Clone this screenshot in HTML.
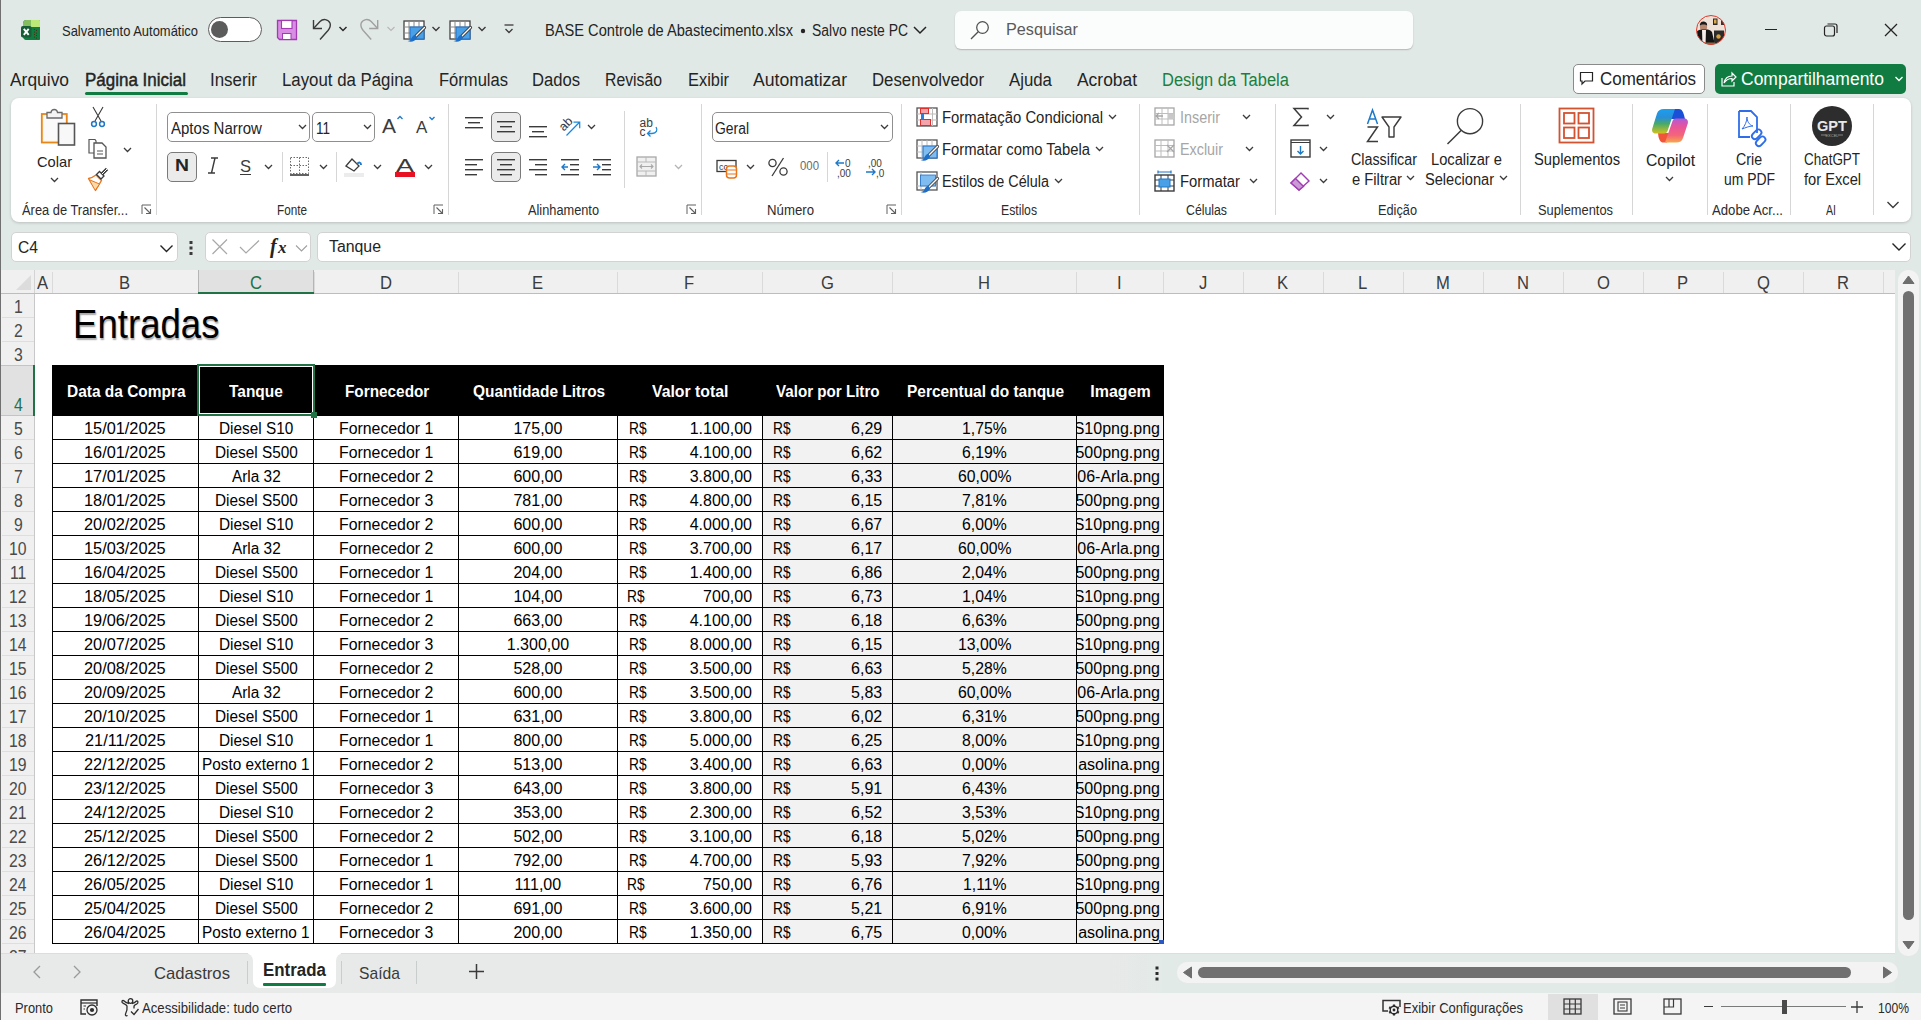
<!DOCTYPE html>
<html><head><meta charset="utf-8"><style>
html,body{margin:0;padding:0;}
body{width:1921px;height:1020px;position:relative;overflow:hidden;background:#fff;font-family:"Liberation Sans",sans-serif;}
.t{position:absolute;white-space:nowrap;line-height:1;transform-origin:0 0;}
.r{position:absolute;}
.s{position:absolute;overflow:visible;}
</style></head><body>
<div class="r" style="left:0px;top:0px;width:1921px;height:270px;background:#e1e9e6;"></div>
<div class="r" style="left:11px;top:98px;width:1900px;height:124px;background:#fff;border-radius:8px;box-shadow:0 1px 3px rgba(0,0,0,0.18);"></div>
<svg class="s" style="left:16px;top:16px;" width="30" height="30" viewBox="0 0 30 30">
<path d="M10 4 H23 C23.6 4 24 4.4 24 5 V23 C24 23.6 23.6 24 23 24 H10 C8.5 24 7 22.5 7 21 V7 C7 5.5 8.5 4 10 4 Z" fill="#107c41"/>
<path d="M10 4 H15 V11 H7 V7 C7 5.5 8.5 4 10 4 Z" fill="#86bd5e"/>
<path d="M15 4 H23 C23.6 4 24 4.4 24 5 V11 H15 Z" fill="#bce877"/>
<rect x="5" y="10" width="10.5" height="11.5" rx="1.8" fill="#175d36"/>
<path d="M7.8 12.8 L12.7 18.8 M12.7 12.8 L7.8 18.8" stroke="#fff" stroke-width="1.9"/>
<circle cx="18.5" cy="13.5" r="0.6" fill="#4a2a10"/><circle cx="18.5" cy="16" r="0.6" fill="#4a2a10"/><circle cx="18.5" cy="18.5" r="0.6" fill="#4a2a10"/><circle cx="18.5" cy="21" r="0.6" fill="#4a2a10"/>
<circle cx="20.5" cy="14.5" r="0.6" fill="#4a2a10"/><circle cx="20.5" cy="17" r="0.6" fill="#4a2a10"/><circle cx="20.5" cy="19.5" r="0.6" fill="#4a2a10"/><circle cx="20.5" cy="22" r="0.6" fill="#4a2a10"/>
</svg>
<div class="t" style="left:62.00px;top:22.65px;font-size:15px;color:#242424;transform:scaleX(0.8629);">Salvamento Automático</div>
<div class="r" style="left:208px;top:17px;width:52px;height:23px;border:1px solid #5c5c5c;border-radius:13px;background:#fff;"></div>
<div class="r" style="left:211px;top:21px;width:17px;height:17px;border-radius:50%;background:#5c5c5c;"></div>
<svg class="s" style="left:276px;top:19px;" width="22" height="22" viewBox="0 0 22 22"><path d="M1.5 1.5 H20.5 V20.5 H3.5 L1.5 18.5 Z" fill="#d88ee2" stroke="#a23ab4" stroke-width="1.3"/><rect x="5.5" y="1.5" width="10.5" height="8" fill="#fff" stroke="#a23ab4" stroke-width="1.1"/><rect x="6.5" y="14.5" width="8.5" height="6" fill="#fff" stroke="#a23ab4" stroke-width="1"/></svg>
<svg class="s" style="left:310px;top:18px;" width="24" height="24" viewBox="0 0 24 24"><path d="M3.5 2 V10.5 H12" fill="none" stroke="#3a3a3a" stroke-width="1.4"/><path d="M4 10 L10 3.5 C13 0.5 18 1 20 5 C21 8 20 10 18 12.5 L10 21.5" fill="none" stroke="#3a3a3a" stroke-width="1.4"/></svg>
<svg class="s" style="left:338px;top:25px;" width="10" height="8" viewBox="0 0 10 8"><path d="M1.5 2 L5 5.5 L8.5 2" fill="none" stroke="#2a2a2a" stroke-width="1.5"/></svg>
<svg class="s" style="left:358px;top:18px;" width="24" height="24" viewBox="0 0 24 24"><path d="M19.7 2 V10.5 H11.2" fill="none" stroke="#a0a0a0" stroke-width="1.4"/><path d="M19.2 10 L13.2 3.5 C10.2 0.5 5.2 1 3.2 5 C2.2 8 3.2 10 5.2 12.5 L13.2 21.5" fill="none" stroke="#a0a0a0" stroke-width="1.4"/></svg>
<svg class="s" style="left:386px;top:25px;" width="10" height="8" viewBox="0 0 10 8"><path d="M1.5 2 L5 5.5 L8.5 2" fill="none" stroke="#b8b8b8" stroke-width="1.2"/></svg>
<svg class="s" style="left:403px;top:20px;" width="22" height="22" viewBox="0 0 22 22"><rect x="1" y="1" width="20" height="18" fill="#fff" stroke="#444" stroke-width="1.3"/><path d="M6 1 V19 M11 1 V7 M16 1 V7 M1 7 H21 M1 13 H7" stroke="#888" stroke-width="1"/><rect x="7" y="7" width="14" height="12" fill="#4aa0e6" stroke="#1e6fc8" stroke-width="1"/><path d="M21.5 7.5 L12.5 16.5" stroke="#444" stroke-width="3.2" stroke-linecap="round"/><path d="M21.5 7.5 L12.5 16.5" stroke="#fff" stroke-width="1.2" stroke-linecap="round"/><path d="M12.8 15 C10 15 9 17 8.5 18.5 C8 20 6.5 20.8 4.5 21 C8 22.5 12 21.5 14 18 Z" fill="#1e6fc8"/></svg>
<svg class="s" style="left:431px;top:25px;" width="10" height="8" viewBox="0 0 10 8"><path d="M1.5 2 L5 5.5 L8.5 2" fill="none" stroke="#3a3a3a" stroke-width="1.4"/></svg>
<svg class="s" style="left:449px;top:20px;" width="22" height="22" viewBox="0 0 22 22"><rect x="1" y="1" width="20" height="18" fill="#fff" stroke="#444" stroke-width="1.3"/><path d="M6 1 V19 M11 1 V7 M16 1 V7 M1 7 H21 M1 13 H7" stroke="#888" stroke-width="1"/><rect x="7" y="7" width="14" height="12" fill="#4aa0e6" stroke="#1e6fc8" stroke-width="1"/><path d="M21.5 7.5 L12.5 16.5" stroke="#444" stroke-width="3.2" stroke-linecap="round"/><path d="M21.5 7.5 L12.5 16.5" stroke="#fff" stroke-width="1.2" stroke-linecap="round"/><path d="M12.8 15 C10 15 9 17 8.5 18.5 C8 20 6.5 20.8 4.5 21 C8 22.5 12 21.5 14 18 Z" fill="#1e6fc8"/></svg>
<svg class="s" style="left:477px;top:25px;" width="10" height="8" viewBox="0 0 10 8"><path d="M1.5 2 L5 5.5 L8.5 2" fill="none" stroke="#3a3a3a" stroke-width="1.4"/></svg>
<svg class="s" style="left:503px;top:23px;" width="12" height="14" viewBox="0 0 12 14"><path d="M1.5 2 H10.5" stroke="#3a3a3a" stroke-width="1.3"/><path d="M2.5 6 L6 9.5 L9.5 6" fill="none" stroke="#3a3a3a" stroke-width="1.3"/></svg>
<div class="t" style="left:545.00px;top:22.50px;font-size:16px;color:#242424;transform:scaleX(0.9141);">BASE Controle de Abastecimento.xlsx</div>
<svg class="s" style="left:799px;top:27px;" width="8" height="8" viewBox="0 0 8 8"><circle cx="4" cy="4" r="2.2" fill="#242424"/></svg>
<div class="t" style="left:812.00px;top:22.50px;font-size:16px;color:#242424;transform:scaleX(0.8704);">Salvo neste PC</div>
<svg class="s" style="left:912px;top:24px;" width="16" height="12" viewBox="0 0 16 12"><path d="M2 3 L8 9 L14 3" fill="none" stroke="#242424" stroke-width="1.5"/></svg>
<div class="r" style="left:955px;top:11px;width:458px;height:38px;background:#fbfcfc;border-radius:6px;box-shadow:0 1px 1.5px rgba(0,0,0,0.22);"></div>
<svg class="s" style="left:969px;top:19px;" width="22" height="22" viewBox="0 0 22 22"><circle cx="13.5" cy="8.5" r="5.8" fill="none" stroke="#505050" stroke-width="1.25"/><path d="M9.2 12.8 L2 20" stroke="#505050" stroke-width="1.3"/></svg>
<div class="t" style="left:1006.00px;top:20.84px;font-size:17px;color:#5a5a5a;transform:scaleX(0.9524);">Pesquisar</div>
<svg class="s" style="left:1696px;top:15px;" width="30" height="30" viewBox="0 0 30 30"><defs><clipPath id="avc"><circle cx="15" cy="15" r="14.5"/></clipPath></defs>
<g clip-path="url(#avc)">
<rect x="0" y="0" width="30" height="30" fill="#eee2d8"/>
<rect x="17" y="3.5" width="4.5" height="6.5" fill="#2a2a2a"/><rect x="18" y="4.5" width="2.5" height="4" fill="#d8a84a"/>
<rect x="25" y="5" width="3" height="5" fill="#333"/>
<ellipse cx="7.5" cy="12" rx="3.6" ry="4.2" fill="#b88770"/>
<path d="M3.8 10.5 C4 7 6 6.5 7.5 6.5 C9.5 6.5 11.2 7.5 11.2 10.5 C10 9 5 9 3.8 10.5 Z" fill="#1a1a1a"/>
<path d="M0 30 V18 C1 15 4 14.5 7.5 14.5 C11 14.5 14 14 16 17 L19 30 Z" fill="#141414"/>
<path d="M6 15 H10 L9.5 30 H6.5 Z" fill="#f3ece8"/>
<rect x="18" y="15.5" width="10" height="13" fill="#2b2b2b"/>
<circle cx="22.5" cy="21.5" r="2.2" fill="#d8a040"/>
<rect x="7" y="27.5" width="12" height="3" fill="#8a6a4a"/>
</g><circle cx="15" cy="15" r="14.5" fill="none" stroke="#e03a2a" stroke-width="1"/></svg>
<div class="r" style="left:1765px;top:29px;width:12px;height:1.3px;background:#242424;"></div>
<svg class="s" style="left:1823px;top:22px;" width="16" height="16" viewBox="0 0 16 16"><rect x="1.5" y="4" width="10" height="10" rx="2" fill="none" stroke="#242424" stroke-width="1.2"/><path d="M4.5 2 H12 C13.5 2 14 2.5 14 4 V11" fill="none" stroke="#242424" stroke-width="1.2"/></svg>
<svg class="s" style="left:1884px;top:23px;" width="14" height="14" viewBox="0 0 14 14"><path d="M1 1 L13 13 M13 1 L1 13" stroke="#242424" stroke-width="1.3"/></svg>
<div class="t" style="left:10.00px;top:70.68px;font-size:18px;color:#242424;transform:scaleX(0.9672);">Arquivo</div>
<div class="t" style="left:85.00px;top:70.68px;font-size:18px;color:#242424;transform:scaleX(0.9430);-webkit-text-stroke:0.45px #242424;">Página Inicial</div>
<div class="t" style="left:210.00px;top:70.68px;font-size:18px;color:#242424;transform:scaleX(0.9400);">Inserir</div>
<div class="t" style="left:282.00px;top:70.68px;font-size:18px;color:#242424;transform:scaleX(0.9344);">Layout da Página</div>
<div class="t" style="left:439.00px;top:70.68px;font-size:18px;color:#242424;transform:scaleX(0.9200);">Fórmulas</div>
<div class="t" style="left:532.00px;top:70.68px;font-size:18px;color:#242424;transform:scaleX(0.9231);">Dados</div>
<div class="t" style="left:605.00px;top:70.68px;font-size:18px;color:#242424;transform:scaleX(0.8769);">Revisão</div>
<div class="t" style="left:688.00px;top:70.68px;font-size:18px;color:#242424;transform:scaleX(0.9111);">Exibir</div>
<div class="t" style="left:753.00px;top:70.68px;font-size:18px;color:#242424;transform:scaleX(0.9792);">Automatizar</div>
<div class="t" style="left:872.00px;top:70.68px;font-size:18px;color:#242424;transform:scaleX(0.9326);">Desenvolvedor</div>
<div class="t" style="left:1009.00px;top:70.68px;font-size:18px;color:#242424;transform:scaleX(0.9328);">Ajuda</div>
<div class="t" style="left:1077.00px;top:70.68px;font-size:18px;color:#242424;transform:scaleX(0.9677);">Acrobat</div>
<div class="t" style="left:1162.00px;top:70.68px;font-size:18px;color:#1a7f3f;transform:scaleX(0.9143);">Design da Tabela</div>
<div class="r" style="left:85px;top:92px;width:103px;height:3px;background:#107c41;border-radius:2px;"></div>
<div class="r" style="left:1573px;top:64px;width:130px;height:28px;border:1px solid #8a8a8a;border-radius:5px;background:#fff;"></div>
<svg class="s" style="left:1579px;top:71px;" width="16" height="16" viewBox="0 0 16 16"><path d="M1.5 1.5 H13.5 V10 H6 L3 13 V10 H1.5 Z" fill="none" stroke="#242424" stroke-width="1.2"/></svg>
<div class="t" style="left:1600.00px;top:70.38px;font-size:18px;color:#242424;transform:scaleX(0.9412);">Comentários</div>
<div class="r" style="left:1715px;top:64px;width:191px;height:30px;border-radius:5px;background:#107c41;"></div>
<svg class="s" style="left:1720px;top:70px;" width="18" height="18" viewBox="0 0 18 18"><path d="M2 8 V16 H14 V12" fill="none" stroke="#fff" stroke-width="1.2"/><path d="M4 13 C5 8 8 6 12 6 V3 L16 7 L12 11 V8.5 C9 8.5 6 10 4 13 Z" fill="none" stroke="#fff" stroke-width="1.2"/></svg>
<div class="t" style="left:1741.00px;top:70.38px;font-size:18px;color:#ffffff;transform:scaleX(0.9721);">Compartilhamento</div>
<svg class="s" style="left:1894px;top:75px;" width="10" height="8" viewBox="0 0 10 8"><path d="M1.5 2 L5 5.5 L8.5 2" fill="none" stroke="#fff" stroke-width="1.4"/></svg>
<div class="r" style="left:156px;top:104px;width:1px;height:111px;background:#d6d6d6;"></div>
<div class="r" style="left:448px;top:104px;width:1px;height:111px;background:#d6d6d6;"></div>
<div class="r" style="left:701px;top:104px;width:1px;height:111px;background:#d6d6d6;"></div>
<div class="r" style="left:901px;top:104px;width:1px;height:111px;background:#d6d6d6;"></div>
<div class="r" style="left:1139px;top:104px;width:1px;height:111px;background:#d6d6d6;"></div>
<div class="r" style="left:1275px;top:104px;width:1px;height:111px;background:#d6d6d6;"></div>
<div class="r" style="left:1520px;top:104px;width:1px;height:111px;background:#d6d6d6;"></div>
<div class="r" style="left:1632px;top:104px;width:1px;height:111px;background:#d6d6d6;"></div>
<div class="r" style="left:1707px;top:104px;width:1px;height:111px;background:#d6d6d6;"></div>
<div class="r" style="left:1790px;top:104px;width:1px;height:111px;background:#d6d6d6;"></div>
<div class="r" style="left:1873px;top:104px;width:1px;height:111px;background:#d6d6d6;"></div>
<div class="t" style="left:22.00px;top:202.81px;font-size:14px;color:#2c2c2c;transform:scaleX(0.9201);">Área de Transfer...</div>
<svg class="s" style="left:141px;top:204px;" width="11" height="11" viewBox="0 0 11 11"><path d="M1 10 V1 H10" fill="none" stroke="#616161" stroke-width="1"/><path d="M3.5 3.5 L9.5 9.5 M5 9.5 H9.5 V5" fill="none" stroke="#616161" stroke-width="1.1"/></svg>
<div class="t" style="left:277.00px;top:202.81px;font-size:14px;color:#2c2c2c;transform:scaleX(0.8380);">Fonte</div>
<svg class="s" style="left:433px;top:204px;" width="11" height="11" viewBox="0 0 11 11"><path d="M1 10 V1 H10" fill="none" stroke="#616161" stroke-width="1"/><path d="M3.5 3.5 L9.5 9.5 M5 9.5 H9.5 V5" fill="none" stroke="#616161" stroke-width="1.1"/></svg>
<div class="t" style="left:528.00px;top:202.81px;font-size:14px;color:#2c2c2c;transform:scaleX(0.9126);">Alinhamento</div>
<svg class="s" style="left:686px;top:204px;" width="11" height="11" viewBox="0 0 11 11"><path d="M1 10 V1 H10" fill="none" stroke="#616161" stroke-width="1"/><path d="M3.5 3.5 L9.5 9.5 M5 9.5 H9.5 V5" fill="none" stroke="#616161" stroke-width="1.1"/></svg>
<div class="t" style="left:767.00px;top:202.81px;font-size:14px;color:#2c2c2c;transform:scaleX(0.9438);">Número</div>
<svg class="s" style="left:886px;top:204px;" width="11" height="11" viewBox="0 0 11 11"><path d="M1 10 V1 H10" fill="none" stroke="#616161" stroke-width="1"/><path d="M3.5 3.5 L9.5 9.5 M5 9.5 H9.5 V5" fill="none" stroke="#616161" stroke-width="1.1"/></svg>
<div class="t" style="left:1001.00px;top:202.81px;font-size:14px;color:#2c2c2c;transform:scaleX(0.8738);">Estilos</div>
<div class="t" style="left:1186.00px;top:202.81px;font-size:14px;color:#2c2c2c;transform:scaleX(0.8779);">Células</div>
<div class="t" style="left:1378.00px;top:202.81px;font-size:14px;color:#2c2c2c;transform:scaleX(0.9112);">Edição</div>
<div class="t" style="left:1538.00px;top:202.81px;font-size:14px;color:#2c2c2c;transform:scaleX(0.9180);">Suplementos</div>
<div class="t" style="left:1712.00px;top:202.81px;font-size:14px;color:#2c2c2c;transform:scaleX(0.9404);">Adobe Acr...</div>
<div class="t" style="left:1826.00px;top:202.81px;font-size:14px;color:#2c2c2c;transform:scaleX(0.7576);">AI</div>
<svg class="s" style="left:1886px;top:200px;" width="14" height="10" viewBox="0 0 14 10"><path d="M1.5 2 L7 7.5 L12.5 2" fill="none" stroke="#3b3b3b" stroke-width="1.4"/></svg>
<svg class="s" style="left:40px;top:106px;" width="37" height="42" viewBox="0 0 37 42">
<rect x="1.8" y="8" width="25" height="28.5" fill="#fff3dc" stroke="#e8861a" stroke-width="1.8"/>
<rect x="4" y="10" width="21" height="24.5" fill="#fafafa"/>
<path d="M7 12 V6.5 H11 C11.5 2.5 17 2.5 17.5 6.5 H22 V12 Z" fill="#f4f4f4" stroke="#6a6a6a" stroke-width="1.3"/>
<rect x="18.5" y="17.5" width="16" height="21.5" fill="#f8f8f8" stroke="#555" stroke-width="1.6"/>
</svg>
<div class="t" style="left:37.00px;top:153.65px;font-size:15px;color:#242424;transform:scaleX(0.9777);">Colar</div>
<svg class="s" style="left:49.5px;top:177.25px;" width="9" height="5.5" viewBox="0 0 9 5.5"><path d="M1 1 L4.5 4.5 L8 1" fill="none" stroke="#3b3b3b" stroke-width="1.3"/></svg>
<svg class="s" style="left:90px;top:106px;" width="16" height="22" viewBox="0 0 16 22"><path d="M3 1 L11 15 M13 1 L5 15" stroke="#3b3b3b" stroke-width="1.1"/><circle cx="4" cy="18" r="2.4" fill="none" stroke="#1e78c8" stroke-width="1.5"/><circle cx="12" cy="18" r="2.4" fill="none" stroke="#1e78c8" stroke-width="1.5"/></svg>
<svg class="s" style="left:87px;top:138px;" width="22" height="22" viewBox="0 0 22 22"><path d="M2 1.5 H8 L9 3 V15 H2 Z" fill="#fff" stroke="#555" stroke-width="1.2"/><path d="M7 5 H15 L19 9 V20 H7 Z" fill="#fff" stroke="#555" stroke-width="1.3"/><path d="M10 13 H16 M10 16 H16" stroke="#555" stroke-width="1"/></svg>
<svg class="s" style="left:122.5px;top:147.25px;" width="9" height="5.5" viewBox="0 0 9 5.5"><path d="M1 1 L4.5 4.5 L8 1" fill="none" stroke="#3b3b3b" stroke-width="1.3"/></svg>
<svg class="s" style="left:87px;top:170px;overflow:visible;" width="24" height="22" viewBox="0 0 24 22"><path d="M1.5 8.5 C4.5 8 7 6.5 9 5 L14.5 10.5 C13 13 10.5 17 8.5 20.5 Z" fill="#fff" stroke="#e8751a" stroke-width="1.4" stroke-linejoin="round"/><path d="M3 10 L12.5 14 L8.5 20" fill="#fbd9a8" stroke="#e8751a" stroke-width="1"/><path d="M9.5 4.5 L12.5 1.5 L17 6 L14 9 Z" fill="#fff" stroke="#3b3b3b" stroke-width="1.3"/><path d="M15 4 L20 -1" stroke="#3b3b3b" stroke-width="3.2"/><path d="M15 4 L20 -1" stroke="#fff" stroke-width="1"/></svg>
<div class="r" style="left:167px;top:112px;width:141px;height:28px;border:1px solid #8f8f8f;border-radius:5px;background:#fff;"></div>
<div class="t" style="left:171.00px;top:120.50px;font-size:16px;color:#242424;transform:scaleX(0.9381);">Aptos Narrow</div>
<svg class="s" style="left:297.5px;top:124.25px;" width="9" height="5.5" viewBox="0 0 9 5.5"><path d="M1 1 L4.5 4.5 L8 1" fill="none" stroke="#3b3b3b" stroke-width="1.3"/></svg>
<div class="r" style="left:312px;top:112px;width:61px;height:28px;border:1px solid #8f8f8f;border-radius:5px;background:#fff;"></div>
<div class="t" style="left:316.00px;top:120.50px;font-size:16px;color:#242424;transform:scaleX(0.8434);">11</div>
<svg class="s" style="left:362.5px;top:124.25px;" width="9" height="5.5" viewBox="0 0 9 5.5"><path d="M1 1 L4.5 4.5 L8 1" fill="none" stroke="#3b3b3b" stroke-width="1.3"/></svg>
<svg class="s" style="left:381px;top:114px;" width="24" height="22" viewBox="0 0 24 22"><text x="1" y="19" font-size="21" fill="#3b3b3b" font-family="Liberation Sans">A</text><path d="M16.5 5 L19 2.5 L21.5 5" fill="none" stroke="#1e78c8" stroke-width="1.3"/></svg>
<svg class="s" style="left:415px;top:114px;" width="24" height="22" viewBox="0 0 24 22"><text x="1" y="19" font-size="17" fill="#3b3b3b" font-family="Liberation Sans">A</text><path d="M14.5 3 L17 5.5 L19.5 3" fill="none" stroke="#1e78c8" stroke-width="1.3"/></svg>
<div class="r" style="left:167px;top:152px;width:28px;height:28px;border:1px solid #7a7a7a;border-radius:5px;background:#ebebeb;"></div>
<div class="t" style="left:175.00px;top:157.34px;font-size:17px;color:#242424;font-weight:bold;transform:scaleX(1.1382);">N</div>
<svg class="s" style="left:205px;top:155px;" width="16" height="22" viewBox="0 0 16 22"><path d="M6 3 H13 M3 18 H10 M10 3 L6.5 18" stroke="#3b3b3b" stroke-width="1.4" fill="none"/></svg>
<div class="t" style="left:240.00px;top:157.84px;font-size:17px;color:#3b3b3b;transform:scaleX(0.9735);">S</div>
<div class="r" style="left:240px;top:174px;width:11px;height:1.3px;background:#3b3b3b;"></div>
<svg class="s" style="left:263.5px;top:164.25px;" width="9" height="5.5" viewBox="0 0 9 5.5"><path d="M1 1 L4.5 4.5 L8 1" fill="none" stroke="#3b3b3b" stroke-width="1.3"/></svg>
<div class="r" style="left:282px;top:152px;width:1px;height:30px;background:#d6d6d6;"></div>
<svg class="s" style="left:289px;top:156px;" width="22" height="22" viewBox="0 0 22 22"><rect x="1.5" y="1.5" width="18" height="16" fill="none" stroke="#6a6a6a" stroke-width="1" stroke-dasharray="1.5 1.5"/><path d="M10.5 1.5 V17.5 M1.5 9.5 H19.5" stroke="#6a6a6a" stroke-width="1" stroke-dasharray="1.5 1.5"/><path d="M1 19 H20" stroke="#3b3b3b" stroke-width="1.6"/></svg>
<svg class="s" style="left:318.5px;top:164.25px;" width="9" height="5.5" viewBox="0 0 9 5.5"><path d="M1 1 L4.5 4.5 L8 1" fill="none" stroke="#3b3b3b" stroke-width="1.3"/></svg>
<div class="r" style="left:336px;top:152px;width:1px;height:30px;background:#d6d6d6;"></div>
<svg class="s" style="left:343px;top:156px;" width="24" height="24" viewBox="0 0 24 24"><path d="M3 10 L9 3 L16 10 L11 15 Z" fill="#fff" stroke="#3b3b3b" stroke-width="1.3"/><path d="M14 8 C16 6 18 6 18 9" fill="none" stroke="#1e78c8" stroke-width="2"/><rect x="1" y="17" width="20" height="4" fill="#ececec"/></svg>
<svg class="s" style="left:372.5px;top:164.25px;" width="9" height="5.5" viewBox="0 0 9 5.5"><path d="M1 1 L4.5 4.5 L8 1" fill="none" stroke="#3b3b3b" stroke-width="1.3"/></svg>
<div class="t" style="left:396.00px;top:155.53px;font-size:19px;color:#3b3b3b;transform:scaleX(1.4173);">A</div>
<div class="r" style="left:395px;top:172px;width:20px;height:5px;background:#e81123;"></div>
<svg class="s" style="left:423.5px;top:164.25px;" width="9" height="5.5" viewBox="0 0 9 5.5"><path d="M1 1 L4.5 4.5 L8 1" fill="none" stroke="#3b3b3b" stroke-width="1.3"/></svg>
<svg class="s" style="left:465px;top:117px;" width="20" height="17" viewBox="0 0 20 17"><rect x="0" y="0" width="18" height="1.4" fill="#3b3b3b"/><rect x="3" y="5" width="12" height="1.4" fill="#3b3b3b"/><rect x="0" y="10" width="18" height="1.4" fill="#3b3b3b"/></svg>
<div class="r" style="left:491px;top:112px;width:28px;height:28px;border:1px solid #7a7a7a;border-radius:5px;background:#ebebeb;"></div>
<svg class="s" style="left:497px;top:121px;" width="20" height="17" viewBox="0 0 20 17"><rect x="0" y="0" width="18" height="1.4" fill="#3b3b3b"/><rect x="3" y="5" width="12" height="1.4" fill="#3b3b3b"/><rect x="0" y="10" width="18" height="1.4" fill="#3b3b3b"/></svg>
<svg class="s" style="left:529px;top:126px;" width="20" height="17" viewBox="0 0 20 17"><rect x="0" y="0" width="18" height="1.4" fill="#3b3b3b"/><rect x="3" y="5" width="12" height="1.4" fill="#3b3b3b"/><rect x="0" y="10" width="18" height="1.4" fill="#3b3b3b"/></svg>
<svg class="s" style="left:559px;top:116px;" width="24" height="22" viewBox="0 0 24 22"><g transform="translate(6.8,7.2) rotate(-45)"><text x="-7.5" y="4.5" font-size="12.5" fill="#3b3b3b" font-family="Liberation Sans">ab</text></g><path d="M7.5 19.5 L20.5 6.2 M14.5 6 H20.7 V12.2" fill="none" stroke="#1e88d8" stroke-width="1.25"/></svg>
<svg class="s" style="left:586.5px;top:124.25px;" width="9" height="5.5" viewBox="0 0 9 5.5"><path d="M1 1 L4.5 4.5 L8 1" fill="none" stroke="#3b3b3b" stroke-width="1.3"/></svg>
<div class="r" style="left:624px;top:111px;width:1px;height:77px;background:#d6d6d6;"></div>
<svg class="s" style="left:638px;top:115px;" width="22" height="24" viewBox="0 0 22 24"><text x="1.5" y="12" font-size="12" fill="#3b3b3b" font-family="Liberation Sans">ab</text><text x="1.5" y="21" font-size="12" fill="#3b3b3b" font-family="Liberation Sans">c</text><path d="M18 12 C20 15 18.5 18.5 14 18.5 H9.5 M12.5 15.5 L9.5 18.5 L12.5 21.5" fill="none" stroke="#1e88d8" stroke-width="1.3"/></svg>
<svg class="s" style="left:465px;top:159px;" width="20" height="22" viewBox="0 0 20 22"><rect x="0" y="0" width="18" height="1.4" fill="#3b3b3b"/><rect x="0" y="5" width="12" height="1.4" fill="#3b3b3b"/><rect x="0" y="10" width="18" height="1.4" fill="#3b3b3b"/><rect x="0" y="15" width="12" height="1.4" fill="#3b3b3b"/></svg>
<div class="r" style="left:491px;top:152px;width:28px;height:28px;border:1px solid #7a7a7a;border-radius:5px;background:#ebebeb;"></div>
<svg class="s" style="left:497px;top:159px;" width="20" height="22" viewBox="0 0 20 22"><rect x="0" y="0" width="18" height="1.4" fill="#3b3b3b"/><rect x="3" y="5" width="12" height="1.4" fill="#3b3b3b"/><rect x="0" y="10" width="18" height="1.4" fill="#3b3b3b"/><rect x="3" y="15" width="12" height="1.4" fill="#3b3b3b"/></svg>
<svg class="s" style="left:529px;top:159px;" width="20" height="22" viewBox="0 0 20 22"><rect x="0" y="0" width="18" height="1.4" fill="#3b3b3b"/><rect x="6" y="5" width="12" height="1.4" fill="#3b3b3b"/><rect x="0" y="10" width="18" height="1.4" fill="#3b3b3b"/><rect x="6" y="15" width="12" height="1.4" fill="#3b3b3b"/></svg>
<svg class="s" style="left:561px;top:158px;" width="20" height="20" viewBox="0 0 20 20"><rect x="0" y="1" width="18" height="1.4" fill="#3b3b3b"/><rect x="9" y="6" width="9" height="1.4" fill="#3b3b3b"/><rect x="9" y="11" width="9" height="1.4" fill="#3b3b3b"/><rect x="0" y="16" width="18" height="1.4" fill="#3b3b3b"/><path d="M7 9 H1 M4 6 L1 9 L4 12" fill="none" stroke="#1e78c8" stroke-width="1.4"/></svg>
<svg class="s" style="left:593px;top:158px;" width="20" height="20" viewBox="0 0 20 20"><rect x="0" y="1" width="18" height="1.4" fill="#3b3b3b"/><rect x="9" y="6" width="9" height="1.4" fill="#3b3b3b"/><rect x="9" y="11" width="9" height="1.4" fill="#3b3b3b"/><rect x="0" y="16" width="18" height="1.4" fill="#3b3b3b"/><path d="M0 9 H7 M4 6 L7 9 L4 12" fill="none" stroke="#1e78c8" stroke-width="1.4"/></svg>
<svg class="s" style="left:636px;top:156px;" width="22" height="22" viewBox="0 0 22 22"><rect x="1" y="1" width="19" height="19" fill="#f0f0f0" stroke="#a8a8a8" stroke-width="1.3"/><path d="M1 6 H20 M1 15 H20 M10 1 V6 M10 15 V20" stroke="#b8b8b8" stroke-width="1"/><path d="M4 10.5 H17 M6 8.5 L4 10.5 L6 12.5 M15 8.5 L17 10.5 L15 12.5" fill="none" stroke="#a8a8a8" stroke-width="1.1"/></svg>
<svg class="s" style="left:673.5px;top:164.25px;" width="9" height="5.5" viewBox="0 0 9 5.5"><path d="M1 1 L4.5 4.5 L8 1" fill="none" stroke="#b5b5b5" stroke-width="1.3"/></svg>
<div class="r" style="left:712px;top:112px;width:179px;height:28px;border:1px solid #8f8f8f;border-radius:5px;background:#fff;"></div>
<div class="t" style="left:715.00px;top:120.50px;font-size:16px;color:#242424;transform:scaleX(0.8696);">Geral</div>
<svg class="s" style="left:879.5px;top:124.25px;" width="9" height="5.5" viewBox="0 0 9 5.5"><path d="M1 1 L4.5 4.5 L8 1" fill="none" stroke="#3b3b3b" stroke-width="1.3"/></svg>
<svg class="s" style="left:716px;top:159px;" width="24" height="22" viewBox="0 0 24 22"><rect x="1" y="1.5" width="19" height="11" fill="none" stroke="#3b3b3b" stroke-width="1.3"/><text x="3" y="10.5" font-size="9" fill="#3b3b3b" font-family="Liberation Sans">cc</text><rect x="10.5" y="7" width="10" height="12" rx="3" fill="#fff" stroke="#e8751a" stroke-width="1.5"/><path d="M11 11 H20 M11 15 H20" stroke="#e8751a" stroke-width="1.2"/></svg>
<svg class="s" style="left:745.5px;top:164.25px;" width="9" height="5.5" viewBox="0 0 9 5.5"><path d="M1 1 L4.5 4.5 L8 1" fill="none" stroke="#3b3b3b" stroke-width="1.3"/></svg>
<svg class="s" style="left:766px;top:156px;" width="24" height="22" viewBox="0 0 24 22"><circle cx="6.5" cy="7" r="3.6" fill="none" stroke="#3b3b3b" stroke-width="1.3"/><circle cx="17.5" cy="15.5" r="3.6" fill="none" stroke="#3b3b3b" stroke-width="1.3"/><path d="M17.5 2 L6 20" stroke="#3b3b3b" stroke-width="1.3"/></svg>
<div class="t" style="left:800.00px;top:160.12px;font-size:12px;color:#6a6a6a;transform:scaleX(0.9500);">000</div>
<div class="r" style="left:827px;top:152px;width:1px;height:30px;background:#d6d6d6;"></div>
<svg class="s" style="left:834px;top:157px;" width="22" height="22" viewBox="0 0 22 22"><path d="M10 6 H2 M5 3 L2 6 L5 9" fill="none" stroke="#1e78c8" stroke-width="1.4"/><text x="11" y="10" font-size="10" fill="#3b3b3b" font-family="Liberation Sans">0</text><text x="3" y="20" font-size="10" fill="#3b3b3b" font-family="Liberation Sans">,00</text></svg>
<svg class="s" style="left:865px;top:157px;" width="22" height="22" viewBox="0 0 22 22"><text x="3" y="10" font-size="10" fill="#3b3b3b" font-family="Liberation Sans">,00</text><path d="M1 15 H10 M7 12 L10 15 L7 18" fill="none" stroke="#1e78c8" stroke-width="1.4"/><text x="11" y="20" font-size="10" fill="#3b3b3b" font-family="Liberation Sans">,0</text></svg>
<svg class="s" style="left:916px;top:107px;" width="23" height="22" viewBox="0 0 23 22"><rect x="1" y="1" width="20" height="18" fill="#fff" stroke="#555" stroke-width="1.3"/><path d="M5.5 1 V19 M16.5 1 V19 M1 7 H21 M1 13 H21" stroke="#bbb" stroke-width="1"/><rect x="4.5" y="1.5" width="8" height="5" fill="#f6a3ab" stroke="#e0302e" stroke-width="1"/><rect x="4.5" y="12.5" width="10" height="6" fill="#f6a3ab" stroke="#e0302e" stroke-width="1"/><rect x="5" y="7" width="3" height="5.5" fill="#2b7fd8"/></svg>
<div class="t" style="left:942.00px;top:109.50px;font-size:16px;color:#242424;transform:scaleX(0.9285);">Formatação Condicional</div>
<svg class="s" style="left:1107.5px;top:114.25px;" width="9" height="5.5" viewBox="0 0 9 5.5"><path d="M1 1 L4.5 4.5 L8 1" fill="none" stroke="#3b3b3b" stroke-width="1.3"/></svg>
<svg class="s" style="left:916px;top:139px;" width="23" height="23" viewBox="0 0 23 23"><rect x="1" y="1" width="20" height="18" fill="#fff" stroke="#555" stroke-width="1.3"/><path d="M6 1 V19 M11 1 V7 M16 1 V7 M1 7 H21 M1 13 H7" stroke="#bbb" stroke-width="1"/><rect x="7" y="7" width="14" height="12" fill="#7fbdf0" stroke="#1e6fc8" stroke-width="1"/><path d="M21.5 7.5 L12.5 16.5" stroke="#555" stroke-width="3.2" stroke-linecap="round"/><path d="M21.5 7.5 L12.5 16.5" stroke="#fff" stroke-width="1.2" stroke-linecap="round"/><path d="M12.8 15 C10 15 9 17 8.5 18.5 C8 20 6.5 20.8 4.5 21 C8 22.5 12 21.5 14 18 Z" fill="#1e6fc8"/></svg>
<div class="t" style="left:942.00px;top:141.50px;font-size:16px;color:#242424;transform:scaleX(0.9262);">Formatar como Tabela</div>
<svg class="s" style="left:1094.5px;top:146.25px;" width="9" height="5.5" viewBox="0 0 9 5.5"><path d="M1 1 L4.5 4.5 L8 1" fill="none" stroke="#3b3b3b" stroke-width="1.3"/></svg>
<svg class="s" style="left:916px;top:171px;" width="23" height="23" viewBox="0 0 23 23"><rect x="1" y="1" width="20" height="18" fill="#fff" stroke="#555" stroke-width="1.3"/><path d="M5 1 V19 M1 15 H21" stroke="#bbb" stroke-width="1"/><rect x="4.5" y="4" width="15" height="11" fill="#7fbdf0" stroke="#1e6fc8" stroke-width="0.8"/><path d="M21.5 7.5 L12.5 16.5" stroke="#555" stroke-width="3.2" stroke-linecap="round"/><path d="M21.5 7.5 L12.5 16.5" stroke="#fff" stroke-width="1.2" stroke-linecap="round"/><path d="M12.8 15 C10 15 9 17 8.5 18.5 C8 20 6.5 20.8 4.5 21 C8 22.5 12 21.5 14 18 Z" fill="#1e6fc8"/></svg>
<div class="t" style="left:942.00px;top:173.50px;font-size:16px;color:#242424;transform:scaleX(0.8977);">Estilos de Célula</div>
<svg class="s" style="left:1053.5px;top:178.25px;" width="9" height="5.5" viewBox="0 0 9 5.5"><path d="M1 1 L4.5 4.5 L8 1" fill="none" stroke="#3b3b3b" stroke-width="1.3"/></svg>
<svg class="s" style="left:1154px;top:107px;" width="22" height="21" viewBox="0 0 22 21"><rect x="1" y="1" width="19" height="17" fill="none" stroke="#a6a6a6" stroke-width="1.3"/><path d="M1 6.5 H20 M1 12 H20 M8 1 V18 M14 1 V18" stroke="#bdbdbd" stroke-width="1"/><rect x="14" y="6.5" width="6" height="5.5" fill="#c8c8c8"/><path d="M9 9 H2 M5 6 L2 9 L5 12" fill="none" stroke="#a6a6a6" stroke-width="1.3"/></svg>
<div class="t" style="left:1180.00px;top:109.50px;font-size:16px;color:#a6a6a6;transform:scaleX(0.8989);">Inserir</div>
<svg class="s" style="left:1241.5px;top:114.25px;" width="9" height="5.5" viewBox="0 0 9 5.5"><path d="M1 1 L4.5 4.5 L8 1" fill="none" stroke="#3b3b3b" stroke-width="1.3"/></svg>
<svg class="s" style="left:1154px;top:139px;" width="22" height="21" viewBox="0 0 22 21"><rect x="1" y="1" width="19" height="17" fill="none" stroke="#a6a6a6" stroke-width="1.3"/><path d="M1 6.5 H20 M1 12 H20 M7 1 V18 M14 1 V18" stroke="#bdbdbd" stroke-width="1"/><path d="M13 6 L20 13 M20 6 L13 13" stroke="#a6a6a6" stroke-width="1.3"/></svg>
<div class="t" style="left:1180.00px;top:141.50px;font-size:16px;color:#a6a6a6;transform:scaleX(0.8958);">Excluir</div>
<svg class="s" style="left:1244.5px;top:146.25px;" width="9" height="5.5" viewBox="0 0 9 5.5"><path d="M1 1 L4.5 4.5 L8 1" fill="none" stroke="#3b3b3b" stroke-width="1.3"/></svg>
<svg class="s" style="left:1154px;top:170px;" width="22" height="22" viewBox="0 0 22 22"><rect x="1" y="5" width="19" height="16" fill="none" stroke="#3b3b3b" stroke-width="1.4"/><path d="M1 10 H20 M1 16 H20 M7 5 V21 M14 5 V21" stroke="#3b3b3b" stroke-width="1"/><rect x="5" y="9" width="11" height="8" fill="#4aa0e6" stroke="#1e78c8" stroke-width="1"/><path d="M4 2 H17 M4 0.5 V3.5 M17 0.5 V3.5" stroke="#1e78c8" stroke-width="1.2"/></svg>
<div class="t" style="left:1180.00px;top:173.50px;font-size:16px;color:#242424;transform:scaleX(0.9245);">Formatar</div>
<svg class="s" style="left:1248.5px;top:178.25px;" width="9" height="5.5" viewBox="0 0 9 5.5"><path d="M1 1 L4.5 4.5 L8 1" fill="none" stroke="#3b3b3b" stroke-width="1.3"/></svg>
<svg class="s" style="left:1292px;top:107px;" width="18" height="20" viewBox="0 0 18 20"><path d="M16 2.5 V1.5 H2 L9.5 10 L2 18.5 H16 V17.5" fill="none" stroke="#3b3b3b" stroke-width="1.5" stroke-linejoin="miter"/></svg>
<svg class="s" style="left:1325.5px;top:114.25px;" width="9" height="5.5" viewBox="0 0 9 5.5"><path d="M1 1 L4.5 4.5 L8 1" fill="none" stroke="#3b3b3b" stroke-width="1.3"/></svg>
<svg class="s" style="left:1290px;top:139px;" width="22" height="20" viewBox="0 0 22 20"><rect x="1" y="1" width="19" height="17" fill="none" stroke="#3b3b3b" stroke-width="1.4"/><path d="M1 3.5 H20" stroke="#3b3b3b" stroke-width="1"/><path d="M10.5 7 V15 M7.5 12 L10.5 15 L13.5 12" fill="none" stroke="#1e78c8" stroke-width="1.4"/></svg>
<svg class="s" style="left:1318.5px;top:146.25px;" width="9" height="5.5" viewBox="0 0 9 5.5"><path d="M1 1 L4.5 4.5 L8 1" fill="none" stroke="#3b3b3b" stroke-width="1.3"/></svg>
<svg class="s" style="left:1290px;top:171px;" width="22" height="20" viewBox="0 0 22 20"><path d="M1 12 L11 2 L19 10 L9 19 Z" fill="#fff" stroke="#a23cb5" stroke-width="1.4"/><path d="M1 12 L5.5 7.5 L13.5 15.5 L9 19 Z" fill="#c99ad4" stroke="#a23cb5" stroke-width="1.4"/></svg>
<svg class="s" style="left:1318.5px;top:178.25px;" width="9" height="5.5" viewBox="0 0 9 5.5"><path d="M1 1 L4.5 4.5 L8 1" fill="none" stroke="#3b3b3b" stroke-width="1.3"/></svg>
<svg class="s" style="left:1365px;top:107px;" width="40" height="38" viewBox="0 0 40 38"><path d="M2.5 17 L7.5 3 L12.5 17 M4.3 12 H10.7" fill="none" stroke="#1e78c8" stroke-width="1.5"/><path d="M2.5 20 H12.5 L2.5 34.5 H13" fill="none" stroke="#3b3b3b" stroke-width="1.5"/><path d="M17 10 H36 L29 20 V30 H24 V20 Z" fill="#fff" stroke="#3b3b3b" stroke-width="1.4" stroke-linejoin="round"/></svg>
<div class="t" style="left:1351.00px;top:151.50px;font-size:16px;color:#242424;transform:scaleX(0.8943);">Classificar</div>
<div class="t" style="left:1352.00px;top:171.50px;font-size:16px;color:#242424;transform:scaleX(0.9225);">e Filtrar</div>
<svg class="s" style="left:1405.5px;top:175.25px;" width="9" height="5.5" viewBox="0 0 9 5.5"><path d="M1 1 L4.5 4.5 L8 1" fill="none" stroke="#3b3b3b" stroke-width="1.3"/></svg>
<svg class="s" style="left:1445px;top:106px;" width="42" height="42" viewBox="0 0 42 42"><circle cx="25" cy="15.2" r="12.6" fill="none" stroke="#3b3b3b" stroke-width="1.4"/><path d="M16.3 24.2 L2.5 38" stroke="#3b3b3b" stroke-width="1.5"/></svg>
<div class="t" style="left:1431.00px;top:151.50px;font-size:16px;color:#242424;transform:scaleX(0.9173);">Localizar e</div>
<div class="t" style="left:1425.00px;top:171.50px;font-size:16px;color:#242424;transform:scaleX(0.9127);">Selecionar</div>
<svg class="s" style="left:1498.5px;top:175.25px;" width="9" height="5.5" viewBox="0 0 9 5.5"><path d="M1 1 L4.5 4.5 L8 1" fill="none" stroke="#3b3b3b" stroke-width="1.3"/></svg>
<svg class="s" style="left:1558px;top:107px;" width="38" height="38" viewBox="0 0 38 38"><rect x="1.5" y="1.5" width="34" height="34" fill="none" stroke="#d35230" stroke-width="1.8"/><rect x="6" y="6" width="10.5" height="10.5" fill="none" stroke="#d35230" stroke-width="1.8"/><rect x="20.5" y="6" width="10.5" height="10.5" fill="none" stroke="#d35230" stroke-width="1.8"/><rect x="6" y="20.5" width="10.5" height="10.5" fill="none" stroke="#d35230" stroke-width="1.8"/><rect x="20.5" y="20.5" width="10.5" height="10.5" fill="none" stroke="#d35230" stroke-width="1.8"/></svg>
<div class="t" style="left:1534.00px;top:151.50px;font-size:16px;color:#242424;transform:scaleX(0.9208);">Suplementos</div>
<svg class="s" style="left:1650px;top:107px;" width="40" height="38" viewBox="0 0 40 38"><defs>
<linearGradient id="cpA" x1="0" y1="0" x2="0" y2="1"><stop offset="0" stop-color="#1b9ef0"/><stop offset="0.35" stop-color="#2a8fd8"/><stop offset="0.6" stop-color="#47a96a"/><stop offset="1" stop-color="#d2c21e"/></linearGradient>
<linearGradient id="cpB" x1="0" y1="0" x2="0" y2="1"><stop offset="0" stop-color="#b35ad4"/><stop offset="0.35" stop-color="#e8559a"/><stop offset="0.7" stop-color="#f4657a"/><stop offset="1" stop-color="#f8a848"/></linearGradient></defs>
<path d="M22 2 H29 C32 2 33 5 34 8 L35 12 H21 Z" fill="#1a4fd8"/>
<path d="M8 26 H20 L17 35.5 H13 C10.5 35.5 9.5 33 8.5 30 Z" fill="#f0553a"/>
<path d="M14 2 H25 L17.5 24 C17 25.5 16 26.5 14 26.5 H6 C3 26.5 1.5 24.5 2.3 21.5 L7 6.5 C8 3.5 10 2 14 2 Z" fill="url(#cpA)"/>
<path d="M26 11.5 H34 C37 11.5 38.5 13.5 37.8 16.5 L33 31 C32 34 30 35.5 26 35.5 H15 L22.5 14 C23 12.5 24 11.5 26 11.5 Z" fill="url(#cpB)"/></svg>
<div class="t" style="left:1646.00px;top:152.34px;font-size:17px;color:#242424;transform:scaleX(0.9263);">Copilot</div>
<svg class="s" style="left:1664.5px;top:176.25px;" width="9" height="5.5" viewBox="0 0 9 5.5"><path d="M1 1 L4.5 4.5 L8 1" fill="none" stroke="#3b3b3b" stroke-width="1.3"/></svg>
<svg class="s" style="left:1736px;top:109px;" width="36" height="40" viewBox="0 0 36 40"><path d="M3 2 H15 L21 8 V24 M3 2 V28 H14" fill="none" stroke="#2f6ee8" stroke-width="1.8"/><path d="M6 20 C9 17 11 12 11 8 C11 12 13 16 17 17 C13 17 9 19 6 20 Z" fill="none" stroke="#2f6ee8" stroke-width="1"/><rect x="18" y="20" width="6" height="11" rx="3" transform="rotate(45 21 25)" fill="none" stroke="#2f6ee8" stroke-width="1.8"/><rect x="22" y="27" width="6" height="11" rx="3" transform="rotate(45 25 32)" fill="none" stroke="#2f6ee8" stroke-width="1.8"/></svg>
<div class="t" style="left:1736.00px;top:151.50px;font-size:16px;color:#242424;transform:scaleX(0.8874);">Crie</div>
<div class="t" style="left:1724.00px;top:171.50px;font-size:16px;color:#242424;transform:scaleX(0.8688);">um PDF</div>
<svg class="s" style="left:1811px;top:105px;" width="42" height="42" viewBox="0 0 42 42"><circle cx="21" cy="21" r="20" fill="#2d2d2d"/><text x="21" y="26" font-size="15" font-weight="bold" fill="#e8e8e8" text-anchor="middle" textLength="30" lengthAdjust="spacingAndGlyphs" font-family="Liberation Sans">GPT</text><path d="M10 30 H15 M27 30 H32" stroke="#aaa" stroke-width="0.7"/><text x="21" y="31.5" font-size="4" fill="#aaa" text-anchor="middle" font-family="Liberation Sans">EXCEL</text></svg>
<div class="t" style="left:1804.00px;top:151.50px;font-size:16px;color:#242424;transform:scaleX(0.8396);">ChatGPT</div>
<div class="t" style="left:1804.00px;top:171.50px;font-size:16px;color:#242424;transform:scaleX(0.9164);">for Excel</div>
<div class="r" style="left:11px;top:232px;width:167px;height:30px;background:#fff;border-radius:5px;border:1px solid #d2d2d2;box-sizing:border-box;"></div>
<div class="t" style="left:18.00px;top:239.50px;font-size:16px;color:#242424;transform:scaleX(0.9756);">C4</div>
<svg class="s" style="left:159px;top:244px;" width="15" height="10" viewBox="0 0 15 10"><path d="M1.5 1.5 L7.5 7.5 L13.5 1.5" fill="none" stroke="#242424" stroke-width="1.4"/></svg>
<svg class="s" style="left:189px;top:240px;" width="5" height="16" viewBox="0 0 5 16"><rect x="0.5" y="1" width="3" height="3" fill="#3b3b3b"/><rect x="0.5" y="6.5" width="3" height="3" fill="#3b3b3b"/><rect x="0.5" y="12" width="3" height="3" fill="#3b3b3b"/></svg>
<div class="r" style="left:205px;top:232px;width:106px;height:30px;background:#fff;border-radius:5px;border:1px solid #d2d2d2;box-sizing:border-box;"></div>
<svg class="s" style="left:211px;top:238px;" width="18" height="18" viewBox="0 0 18 18"><path d="M1.5 1.5 L16 16 M16 1.5 L1.5 16" stroke="#a8a8a8" stroke-width="1.2"/></svg>
<svg class="s" style="left:239px;top:239px;" width="22" height="16" viewBox="0 0 22 16"><path d="M1 8 L7 14 L20 1.5" fill="none" stroke="#a8a8a8" stroke-width="1.2"/></svg>
<svg class="s" style="left:269px;top:236px;" width="24" height="22" viewBox="0 0 24 22"><text x="1" y="17" font-size="20" font-style="italic" font-weight="bold" fill="#242424" font-family="Liberation Serif">f</text><text x="9" y="17" font-size="17" font-style="italic" font-weight="bold" fill="#242424" font-family="Liberation Serif">x</text></svg>
<svg class="s" style="left:295px;top:244px;" width="13" height="9" viewBox="0 0 13 9"><path d="M1 1.5 L6.5 7 L12 1.5" fill="none" stroke="#a0a0a0" stroke-width="1.1"/></svg>
<div class="r" style="left:317px;top:232px;width:1594px;height:30px;background:#fff;border-radius:5px;border:1px solid #d2d2d2;box-sizing:border-box;"></div>
<div class="t" style="left:329.00px;top:239.30px;font-size:16px;color:#242424;transform:scaleX(0.9905);">Tanque</div>
<svg class="s" style="left:1891px;top:242px;" width="16" height="10" viewBox="0 0 16 10"><path d="M1.5 1.5 L8 8 L14.5 1.5" fill="none" stroke="#242424" stroke-width="1.4"/></svg>
<div class="r" style="left:0px;top:270px;width:1895px;height:23px;background:#f0f0f0;"></div>
<svg class="s" style="left:14px;top:274px;" width="18" height="17" viewBox="0 0 18 17"><path d="M17 1 V16 H2 Z" fill="#dcdcdc"/></svg>
<div class="r" style="left:34px;top:270px;width:1px;height:23px;background:#d4d4d4;"></div>
<div class="r" style="left:198px;top:270px;width:116px;height:23px;background:#e1e1e1;"></div>
<div class="r" style="left:52px;top:272px;width:1px;height:21px;background:#dadada;"></div>
<div class="t" style="left:37.44px;top:274.56px;font-size:17.5px;color:#3c3c3c;transform:scaleX(0.9500);">A</div>
<div class="r" style="left:198px;top:272px;width:1px;height:21px;background:#dadada;"></div>
<div class="t" style="left:119.44px;top:274.56px;font-size:17.5px;color:#3c3c3c;transform:scaleX(0.9500);">B</div>
<div class="r" style="left:314px;top:272px;width:1px;height:21px;background:#dadada;"></div>
<div class="t" style="left:250.01px;top:274.56px;font-size:17.5px;color:#217346;transform:scaleX(0.9500);">C</div>
<div class="r" style="left:458px;top:272px;width:1px;height:21px;background:#dadada;"></div>
<div class="t" style="left:380.01px;top:274.56px;font-size:17.5px;color:#3c3c3c;transform:scaleX(0.9500);">D</div>
<div class="r" style="left:617px;top:272px;width:1px;height:21px;background:#dadada;"></div>
<div class="t" style="left:531.94px;top:274.56px;font-size:17.5px;color:#3c3c3c;transform:scaleX(0.9500);">E</div>
<div class="r" style="left:762px;top:272px;width:1px;height:21px;background:#dadada;"></div>
<div class="t" style="left:684.42px;top:274.56px;font-size:17.5px;color:#3c3c3c;transform:scaleX(0.9500);">F</div>
<div class="r" style="left:892px;top:272px;width:1px;height:21px;background:#dadada;"></div>
<div class="t" style="left:820.54px;top:274.56px;font-size:17.5px;color:#3c3c3c;transform:scaleX(0.9500);">G</div>
<div class="r" style="left:1076px;top:272px;width:1px;height:21px;background:#dadada;"></div>
<div class="t" style="left:978.01px;top:274.56px;font-size:17.5px;color:#3c3c3c;transform:scaleX(0.9500);">H</div>
<div class="r" style="left:1163px;top:272px;width:1px;height:21px;background:#dadada;"></div>
<div class="t" style="left:1117.17px;top:274.56px;font-size:17.5px;color:#3c3c3c;transform:scaleX(0.9500);">I</div>
<div class="r" style="left:1243px;top:272px;width:1px;height:21px;background:#dadada;"></div>
<div class="t" style="left:1198.82px;top:274.56px;font-size:17.5px;color:#3c3c3c;transform:scaleX(0.9500);">J</div>
<div class="r" style="left:1323px;top:272px;width:1px;height:21px;background:#dadada;"></div>
<div class="t" style="left:1277.44px;top:274.56px;font-size:17.5px;color:#3c3c3c;transform:scaleX(0.9500);">K</div>
<div class="r" style="left:1403px;top:272px;width:1px;height:21px;background:#dadada;"></div>
<div class="t" style="left:1358.39px;top:274.56px;font-size:17.5px;color:#3c3c3c;transform:scaleX(0.9500);">L</div>
<div class="r" style="left:1483px;top:272px;width:1px;height:21px;background:#dadada;"></div>
<div class="t" style="left:1436.07px;top:274.56px;font-size:17.5px;color:#3c3c3c;transform:scaleX(0.9500);">M</div>
<div class="r" style="left:1563px;top:272px;width:1px;height:21px;background:#dadada;"></div>
<div class="t" style="left:1517.02px;top:274.56px;font-size:17.5px;color:#3c3c3c;transform:scaleX(0.9500);">N</div>
<div class="r" style="left:1643px;top:272px;width:1px;height:21px;background:#dadada;"></div>
<div class="t" style="left:1596.54px;top:274.56px;font-size:17.5px;color:#3c3c3c;transform:scaleX(0.9500);">O</div>
<div class="r" style="left:1723px;top:272px;width:1px;height:21px;background:#dadada;"></div>
<div class="t" style="left:1677.44px;top:274.56px;font-size:17.5px;color:#3c3c3c;transform:scaleX(0.9500);">P</div>
<div class="r" style="left:1803px;top:272px;width:1px;height:21px;background:#dadada;"></div>
<div class="t" style="left:1756.54px;top:274.56px;font-size:17.5px;color:#3c3c3c;transform:scaleX(0.9500);">Q</div>
<div class="r" style="left:1883px;top:272px;width:1px;height:21px;background:#dadada;"></div>
<div class="t" style="left:1837.02px;top:274.56px;font-size:17.5px;color:#3c3c3c;transform:scaleX(0.9500);">R</div>
<div class="r" style="left:0px;top:293px;width:1895px;height:1px;background:#bdbdbd;"></div>
<div class="r" style="left:198px;top:292px;width:116px;height:2px;background:#217346;"></div>
<div class="r" style="left:198px;top:270px;width:1px;height:22px;background:#b5b5b5;"></div>
<div class="r" style="left:313px;top:270px;width:1px;height:22px;background:#b5b5b5;"></div>
<div class="r" style="left:1883px;top:272px;width:1px;height:21px;background:#dadada;"></div>
<div class="r" style="left:0px;top:294px;width:34px;height:659px;background:#f0f0f0;"></div>
<div class="r" style="left:0px;top:366px;width:34px;height:50px;background:#e1e1e1;"></div>
<div class="r" style="left:34px;top:294px;width:1px;height:659px;background:#c8c8c8;"></div>
<div class="r" style="left:33px;top:365px;width:2px;height:51px;background:#217346;"></div>
<div class="r" style="left:1px;top:365px;width:32px;height:1px;background:#c4c4c4;"></div>
<div class="r" style="left:1px;top:415px;width:32px;height:1px;background:#c4c4c4;"></div>
<div class="r" style="left:2px;top:317px;width:32px;height:1px;background:#dedede;"></div>
<div class="t" style="left:13.83px;top:298.76px;font-size:17.5px;color:#4a4a4a;transform:scaleX(0.9000);">1</div>
<div class="r" style="left:2px;top:341px;width:32px;height:1px;background:#dedede;"></div>
<div class="t" style="left:13.83px;top:322.76px;font-size:17.5px;color:#4a4a4a;transform:scaleX(0.9000);">2</div>
<div class="t" style="left:13.83px;top:346.76px;font-size:17.5px;color:#4a4a4a;transform:scaleX(0.9000);">3</div>
<div class="t" style="left:13.83px;top:396.76px;font-size:17.5px;color:#217346;transform:scaleX(0.9000);">4</div>
<div class="r" style="left:2px;top:439px;width:32px;height:1px;background:#dedede;"></div>
<div class="t" style="left:13.83px;top:420.76px;font-size:17.5px;color:#4a4a4a;transform:scaleX(0.9000);">5</div>
<div class="r" style="left:2px;top:463px;width:32px;height:1px;background:#dedede;"></div>
<div class="t" style="left:13.83px;top:444.76px;font-size:17.5px;color:#4a4a4a;transform:scaleX(0.9000);">6</div>
<div class="r" style="left:2px;top:487px;width:32px;height:1px;background:#dedede;"></div>
<div class="t" style="left:13.83px;top:468.76px;font-size:17.5px;color:#4a4a4a;transform:scaleX(0.9000);">7</div>
<div class="r" style="left:2px;top:511px;width:32px;height:1px;background:#dedede;"></div>
<div class="t" style="left:13.83px;top:492.76px;font-size:17.5px;color:#4a4a4a;transform:scaleX(0.9000);">8</div>
<div class="r" style="left:2px;top:535px;width:32px;height:1px;background:#dedede;"></div>
<div class="t" style="left:13.83px;top:516.76px;font-size:17.5px;color:#4a4a4a;transform:scaleX(0.9000);">9</div>
<div class="r" style="left:2px;top:559px;width:32px;height:1px;background:#dedede;"></div>
<div class="t" style="left:9.42px;top:540.76px;font-size:17.5px;color:#4a4a4a;transform:scaleX(0.9000);">10</div>
<div class="r" style="left:2px;top:583px;width:32px;height:1px;background:#dedede;"></div>
<div class="t" style="left:10.01px;top:564.76px;font-size:17.5px;color:#4a4a4a;transform:scaleX(0.9000);">11</div>
<div class="r" style="left:2px;top:607px;width:32px;height:1px;background:#dedede;"></div>
<div class="t" style="left:9.42px;top:588.76px;font-size:17.5px;color:#4a4a4a;transform:scaleX(0.9000);">12</div>
<div class="r" style="left:2px;top:631px;width:32px;height:1px;background:#dedede;"></div>
<div class="t" style="left:9.42px;top:612.76px;font-size:17.5px;color:#4a4a4a;transform:scaleX(0.9000);">13</div>
<div class="r" style="left:2px;top:655px;width:32px;height:1px;background:#dedede;"></div>
<div class="t" style="left:9.42px;top:636.76px;font-size:17.5px;color:#4a4a4a;transform:scaleX(0.9000);">14</div>
<div class="r" style="left:2px;top:679px;width:32px;height:1px;background:#dedede;"></div>
<div class="t" style="left:9.42px;top:660.76px;font-size:17.5px;color:#4a4a4a;transform:scaleX(0.9000);">15</div>
<div class="r" style="left:2px;top:703px;width:32px;height:1px;background:#dedede;"></div>
<div class="t" style="left:9.42px;top:684.76px;font-size:17.5px;color:#4a4a4a;transform:scaleX(0.9000);">16</div>
<div class="r" style="left:2px;top:727px;width:32px;height:1px;background:#dedede;"></div>
<div class="t" style="left:9.42px;top:708.76px;font-size:17.5px;color:#4a4a4a;transform:scaleX(0.9000);">17</div>
<div class="r" style="left:2px;top:751px;width:32px;height:1px;background:#dedede;"></div>
<div class="t" style="left:9.42px;top:732.76px;font-size:17.5px;color:#4a4a4a;transform:scaleX(0.9000);">18</div>
<div class="r" style="left:2px;top:775px;width:32px;height:1px;background:#dedede;"></div>
<div class="t" style="left:9.42px;top:756.76px;font-size:17.5px;color:#4a4a4a;transform:scaleX(0.9000);">19</div>
<div class="r" style="left:2px;top:799px;width:32px;height:1px;background:#dedede;"></div>
<div class="t" style="left:9.42px;top:780.76px;font-size:17.5px;color:#4a4a4a;transform:scaleX(0.9000);">20</div>
<div class="r" style="left:2px;top:823px;width:32px;height:1px;background:#dedede;"></div>
<div class="t" style="left:9.42px;top:804.76px;font-size:17.5px;color:#4a4a4a;transform:scaleX(0.9000);">21</div>
<div class="r" style="left:2px;top:847px;width:32px;height:1px;background:#dedede;"></div>
<div class="t" style="left:9.42px;top:828.76px;font-size:17.5px;color:#4a4a4a;transform:scaleX(0.9000);">22</div>
<div class="r" style="left:2px;top:871px;width:32px;height:1px;background:#dedede;"></div>
<div class="t" style="left:9.42px;top:852.76px;font-size:17.5px;color:#4a4a4a;transform:scaleX(0.9000);">23</div>
<div class="r" style="left:2px;top:895px;width:32px;height:1px;background:#dedede;"></div>
<div class="t" style="left:9.42px;top:876.76px;font-size:17.5px;color:#4a4a4a;transform:scaleX(0.9000);">24</div>
<div class="r" style="left:2px;top:919px;width:32px;height:1px;background:#dedede;"></div>
<div class="t" style="left:9.42px;top:900.76px;font-size:17.5px;color:#4a4a4a;transform:scaleX(0.9000);">25</div>
<div class="r" style="left:2px;top:943px;width:32px;height:1px;background:#dedede;"></div>
<div class="t" style="left:9.42px;top:924.76px;font-size:17.5px;color:#4a4a4a;transform:scaleX(0.9000);">26</div>
<div class="t" style="left:9.42px;top:948.76px;font-size:17.5px;color:#4a4a4a;transform:scaleX(0.9000);">27</div>
<div class="r" style="left:35px;top:294px;width:1860px;height:659px;background:#ffffff;"></div>
<div class="t" style="left:72.50px;top:303.58px;font-size:41px;color:#000000;transform:scaleX(0.8927);text-shadow:1px 1.5px 1.5px rgba(0,0,0,0.35);">Entradas</div>
<div class="r" style="left:52px;top:365px;width:1112px;height:51px;background:#000000;"></div>
<div class="r" style="left:762px;top:416px;width:402px;height:528px;background:#f2f2f2;"></div>
<div class="r" style="left:52px;top:439px;width:1112px;height:1px;background:#000;"></div>
<div class="r" style="left:52px;top:463px;width:1112px;height:1px;background:#000;"></div>
<div class="r" style="left:52px;top:487px;width:1112px;height:1px;background:#000;"></div>
<div class="r" style="left:52px;top:511px;width:1112px;height:1px;background:#000;"></div>
<div class="r" style="left:52px;top:535px;width:1112px;height:1px;background:#000;"></div>
<div class="r" style="left:52px;top:559px;width:1112px;height:1px;background:#000;"></div>
<div class="r" style="left:52px;top:583px;width:1112px;height:1px;background:#000;"></div>
<div class="r" style="left:52px;top:607px;width:1112px;height:1px;background:#000;"></div>
<div class="r" style="left:52px;top:631px;width:1112px;height:1px;background:#000;"></div>
<div class="r" style="left:52px;top:655px;width:1112px;height:1px;background:#000;"></div>
<div class="r" style="left:52px;top:679px;width:1112px;height:1px;background:#000;"></div>
<div class="r" style="left:52px;top:703px;width:1112px;height:1px;background:#000;"></div>
<div class="r" style="left:52px;top:727px;width:1112px;height:1px;background:#000;"></div>
<div class="r" style="left:52px;top:751px;width:1112px;height:1px;background:#000;"></div>
<div class="r" style="left:52px;top:775px;width:1112px;height:1px;background:#000;"></div>
<div class="r" style="left:52px;top:799px;width:1112px;height:1px;background:#000;"></div>
<div class="r" style="left:52px;top:823px;width:1112px;height:1px;background:#000;"></div>
<div class="r" style="left:52px;top:847px;width:1112px;height:1px;background:#000;"></div>
<div class="r" style="left:52px;top:871px;width:1112px;height:1px;background:#000;"></div>
<div class="r" style="left:52px;top:895px;width:1112px;height:1px;background:#000;"></div>
<div class="r" style="left:52px;top:919px;width:1112px;height:1px;background:#000;"></div>
<div class="r" style="left:52px;top:943px;width:1112px;height:1px;background:#000;"></div>
<div class="r" style="left:52px;top:416px;width:1px;height:528px;background:#000;"></div>
<div class="r" style="left:198px;top:416px;width:1px;height:528px;background:#000;"></div>
<div class="r" style="left:313px;top:416px;width:1px;height:528px;background:#000;"></div>
<div class="r" style="left:458px;top:416px;width:1px;height:528px;background:#000;"></div>
<div class="r" style="left:617px;top:416px;width:1px;height:528px;background:#000;"></div>
<div class="r" style="left:762px;top:416px;width:1px;height:528px;background:#000;"></div>
<div class="r" style="left:892px;top:416px;width:1px;height:528px;background:#000;"></div>
<div class="r" style="left:1076px;top:416px;width:1px;height:528px;background:#000;"></div>
<div class="r" style="left:1163px;top:416px;width:1px;height:528px;background:#000;"></div>
<div class="r" style="left:52px;top:365px;width:1px;height:579px;background:#000;"></div>
<div class="t" style="left:66.60px;top:384.00px;font-size:16px;color:#ffffff;font-weight:bold;transform:scaleX(0.9666);">Data da Compra</div>
<div class="t" style="left:229.00px;top:384.00px;font-size:16px;color:#ffffff;font-weight:bold;transform:scaleX(0.9659);">Tanque</div>
<div class="t" style="left:344.70px;top:384.00px;font-size:16px;color:#ffffff;font-weight:bold;transform:scaleX(0.9580);">Fornecedor</div>
<div class="t" style="left:472.80px;top:384.00px;font-size:16px;color:#ffffff;font-weight:bold;transform:scaleX(0.9657);">Quantidade Litros</div>
<div class="t" style="left:652.00px;top:384.00px;font-size:16px;color:#ffffff;font-weight:bold;transform:scaleX(0.9884);">Valor total</div>
<div class="t" style="left:776.00px;top:384.00px;font-size:16px;color:#ffffff;font-weight:bold;transform:scaleX(0.9469);">Valor por Litro</div>
<div class="t" style="left:906.60px;top:384.00px;font-size:16px;color:#ffffff;font-weight:bold;transform:scaleX(0.9656);">Percentual do tanque</div>
<div class="t" style="left:1090.30px;top:384.00px;font-size:16px;color:#ffffff;font-weight:bold;">Imagem</div>
<div class="t" style="left:84.35px;top:420.50px;font-size:16px;color:#000000;transform:scaleX(1.0200);">15/01/2025</div>
<div class="t" style="left:219.05px;top:420.50px;font-size:16px;color:#000000;transform:scaleX(0.9600);">Diesel S10</div>
<div class="t" style="left:338.78px;top:420.50px;font-size:16px;color:#000000;transform:scaleX(0.9900);">Fornecedor 1</div>
<div class="t" style="left:513.45px;top:420.50px;font-size:16px;color:#000000;">175,00</div>
<div class="t" style="left:629.00px;top:420.50px;font-size:16px;color:#000000;transform:scaleX(0.8585);">R$</div>
<div class="t" style="left:689.70px;top:420.50px;font-size:16px;color:#000000;">1.100,00</div>
<div class="t" style="left:772.60px;top:420.50px;font-size:16px;color:#000000;transform:scaleX(0.8585);">R$</div>
<div class="t" style="left:851.10px;top:420.50px;font-size:16px;color:#000000;">6,29</div>
<div class="t" style="left:962.24px;top:420.50px;font-size:16px;color:#000000;transform:scaleX(0.9850);">1,75%</div>
<div class="r" style="left:1077px;top:416px;width:86px;height:23px;overflow:hidden;">
<div class="t" style="right:3px;top:4.50px;font-size:16px;color:#000;">S10png.png</div>
</div>
<div class="t" style="left:84.35px;top:444.50px;font-size:16px;color:#000000;transform:scaleX(1.0200);">16/01/2025</div>
<div class="t" style="left:214.78px;top:444.50px;font-size:16px;color:#000000;transform:scaleX(0.9600);">Diesel S500</div>
<div class="t" style="left:338.78px;top:444.50px;font-size:16px;color:#000000;transform:scaleX(0.9900);">Fornecedor 1</div>
<div class="t" style="left:513.45px;top:444.50px;font-size:16px;color:#000000;">619,00</div>
<div class="t" style="left:629.00px;top:444.50px;font-size:16px;color:#000000;transform:scaleX(0.8585);">R$</div>
<div class="t" style="left:689.70px;top:444.50px;font-size:16px;color:#000000;">4.100,00</div>
<div class="t" style="left:772.60px;top:444.50px;font-size:16px;color:#000000;transform:scaleX(0.8585);">R$</div>
<div class="t" style="left:851.10px;top:444.50px;font-size:16px;color:#000000;">6,62</div>
<div class="t" style="left:962.24px;top:444.50px;font-size:16px;color:#000000;transform:scaleX(0.9850);">6,19%</div>
<div class="r" style="left:1077px;top:440px;width:86px;height:23px;overflow:hidden;">
<div class="t" style="right:3px;top:4.50px;font-size:16px;color:#000;">500png.png</div>
</div>
<div class="t" style="left:84.35px;top:468.50px;font-size:16px;color:#000000;transform:scaleX(1.0200);">17/01/2025</div>
<div class="t" style="left:231.86px;top:468.50px;font-size:16px;color:#000000;transform:scaleX(0.9600);">Arla 32</div>
<div class="t" style="left:338.78px;top:468.50px;font-size:16px;color:#000000;transform:scaleX(0.9900);">Fornecedor 2</div>
<div class="t" style="left:513.45px;top:468.50px;font-size:16px;color:#000000;">600,00</div>
<div class="t" style="left:629.00px;top:468.50px;font-size:16px;color:#000000;transform:scaleX(0.8585);">R$</div>
<div class="t" style="left:689.70px;top:468.50px;font-size:16px;color:#000000;">3.800,00</div>
<div class="t" style="left:772.60px;top:468.50px;font-size:16px;color:#000000;transform:scaleX(0.8585);">R$</div>
<div class="t" style="left:851.10px;top:468.50px;font-size:16px;color:#000000;">6,33</div>
<div class="t" style="left:957.86px;top:468.50px;font-size:16px;color:#000000;transform:scaleX(0.9850);">60,00%</div>
<div class="r" style="left:1077px;top:464px;width:86px;height:23px;overflow:hidden;">
<div class="t" style="right:3px;top:4.50px;font-size:16px;color:#000;">06-Arla.png</div>
</div>
<div class="t" style="left:84.35px;top:492.50px;font-size:16px;color:#000000;transform:scaleX(1.0200);">18/01/2025</div>
<div class="t" style="left:214.78px;top:492.50px;font-size:16px;color:#000000;transform:scaleX(0.9600);">Diesel S500</div>
<div class="t" style="left:338.78px;top:492.50px;font-size:16px;color:#000000;transform:scaleX(0.9900);">Fornecedor 3</div>
<div class="t" style="left:513.45px;top:492.50px;font-size:16px;color:#000000;">781,00</div>
<div class="t" style="left:629.00px;top:492.50px;font-size:16px;color:#000000;transform:scaleX(0.8585);">R$</div>
<div class="t" style="left:689.70px;top:492.50px;font-size:16px;color:#000000;">4.800,00</div>
<div class="t" style="left:772.60px;top:492.50px;font-size:16px;color:#000000;transform:scaleX(0.8585);">R$</div>
<div class="t" style="left:851.10px;top:492.50px;font-size:16px;color:#000000;">6,15</div>
<div class="t" style="left:962.24px;top:492.50px;font-size:16px;color:#000000;transform:scaleX(0.9850);">7,81%</div>
<div class="r" style="left:1077px;top:488px;width:86px;height:23px;overflow:hidden;">
<div class="t" style="right:3px;top:4.50px;font-size:16px;color:#000;">500png.png</div>
</div>
<div class="t" style="left:84.35px;top:516.50px;font-size:16px;color:#000000;transform:scaleX(1.0200);">20/02/2025</div>
<div class="t" style="left:219.05px;top:516.50px;font-size:16px;color:#000000;transform:scaleX(0.9600);">Diesel S10</div>
<div class="t" style="left:338.78px;top:516.50px;font-size:16px;color:#000000;transform:scaleX(0.9900);">Fornecedor 2</div>
<div class="t" style="left:513.45px;top:516.50px;font-size:16px;color:#000000;">600,00</div>
<div class="t" style="left:629.00px;top:516.50px;font-size:16px;color:#000000;transform:scaleX(0.8585);">R$</div>
<div class="t" style="left:689.70px;top:516.50px;font-size:16px;color:#000000;">4.000,00</div>
<div class="t" style="left:772.60px;top:516.50px;font-size:16px;color:#000000;transform:scaleX(0.8585);">R$</div>
<div class="t" style="left:851.10px;top:516.50px;font-size:16px;color:#000000;">6,67</div>
<div class="t" style="left:962.24px;top:516.50px;font-size:16px;color:#000000;transform:scaleX(0.9850);">6,00%</div>
<div class="r" style="left:1077px;top:512px;width:86px;height:23px;overflow:hidden;">
<div class="t" style="right:3px;top:4.50px;font-size:16px;color:#000;">S10png.png</div>
</div>
<div class="t" style="left:84.35px;top:540.50px;font-size:16px;color:#000000;transform:scaleX(1.0200);">15/03/2025</div>
<div class="t" style="left:231.86px;top:540.50px;font-size:16px;color:#000000;transform:scaleX(0.9600);">Arla 32</div>
<div class="t" style="left:338.78px;top:540.50px;font-size:16px;color:#000000;transform:scaleX(0.9900);">Fornecedor 2</div>
<div class="t" style="left:513.45px;top:540.50px;font-size:16px;color:#000000;">600,00</div>
<div class="t" style="left:629.00px;top:540.50px;font-size:16px;color:#000000;transform:scaleX(0.8585);">R$</div>
<div class="t" style="left:689.70px;top:540.50px;font-size:16px;color:#000000;">3.700,00</div>
<div class="t" style="left:772.60px;top:540.50px;font-size:16px;color:#000000;transform:scaleX(0.8585);">R$</div>
<div class="t" style="left:851.10px;top:540.50px;font-size:16px;color:#000000;">6,17</div>
<div class="t" style="left:957.86px;top:540.50px;font-size:16px;color:#000000;transform:scaleX(0.9850);">60,00%</div>
<div class="r" style="left:1077px;top:536px;width:86px;height:23px;overflow:hidden;">
<div class="t" style="right:3px;top:4.50px;font-size:16px;color:#000;">06-Arla.png</div>
</div>
<div class="t" style="left:84.35px;top:564.50px;font-size:16px;color:#000000;transform:scaleX(1.0200);">16/04/2025</div>
<div class="t" style="left:214.78px;top:564.50px;font-size:16px;color:#000000;transform:scaleX(0.9600);">Diesel S500</div>
<div class="t" style="left:338.78px;top:564.50px;font-size:16px;color:#000000;transform:scaleX(0.9900);">Fornecedor 1</div>
<div class="t" style="left:513.45px;top:564.50px;font-size:16px;color:#000000;">204,00</div>
<div class="t" style="left:629.00px;top:564.50px;font-size:16px;color:#000000;transform:scaleX(0.8585);">R$</div>
<div class="t" style="left:689.70px;top:564.50px;font-size:16px;color:#000000;">1.400,00</div>
<div class="t" style="left:772.60px;top:564.50px;font-size:16px;color:#000000;transform:scaleX(0.8585);">R$</div>
<div class="t" style="left:851.10px;top:564.50px;font-size:16px;color:#000000;">6,86</div>
<div class="t" style="left:962.24px;top:564.50px;font-size:16px;color:#000000;transform:scaleX(0.9850);">2,04%</div>
<div class="r" style="left:1077px;top:560px;width:86px;height:23px;overflow:hidden;">
<div class="t" style="right:3px;top:4.50px;font-size:16px;color:#000;">500png.png</div>
</div>
<div class="t" style="left:84.35px;top:588.50px;font-size:16px;color:#000000;transform:scaleX(1.0200);">18/05/2025</div>
<div class="t" style="left:219.05px;top:588.50px;font-size:16px;color:#000000;transform:scaleX(0.9600);">Diesel S10</div>
<div class="t" style="left:338.78px;top:588.50px;font-size:16px;color:#000000;transform:scaleX(0.9900);">Fornecedor 1</div>
<div class="t" style="left:513.45px;top:588.50px;font-size:16px;color:#000000;">104,00</div>
<div class="t" style="left:627.00px;top:588.50px;font-size:16px;color:#000000;transform:scaleX(0.8585);">R$</div>
<div class="t" style="left:703.10px;top:588.50px;font-size:16px;color:#000000;">700,00</div>
<div class="t" style="left:772.60px;top:588.50px;font-size:16px;color:#000000;transform:scaleX(0.8585);">R$</div>
<div class="t" style="left:851.10px;top:588.50px;font-size:16px;color:#000000;">6,73</div>
<div class="t" style="left:962.24px;top:588.50px;font-size:16px;color:#000000;transform:scaleX(0.9850);">1,04%</div>
<div class="r" style="left:1077px;top:584px;width:86px;height:23px;overflow:hidden;">
<div class="t" style="right:3px;top:4.50px;font-size:16px;color:#000;">S10png.png</div>
</div>
<div class="t" style="left:84.35px;top:612.50px;font-size:16px;color:#000000;transform:scaleX(1.0200);">19/06/2025</div>
<div class="t" style="left:214.78px;top:612.50px;font-size:16px;color:#000000;transform:scaleX(0.9600);">Diesel S500</div>
<div class="t" style="left:338.78px;top:612.50px;font-size:16px;color:#000000;transform:scaleX(0.9900);">Fornecedor 2</div>
<div class="t" style="left:513.45px;top:612.50px;font-size:16px;color:#000000;">663,00</div>
<div class="t" style="left:629.00px;top:612.50px;font-size:16px;color:#000000;transform:scaleX(0.8585);">R$</div>
<div class="t" style="left:689.70px;top:612.50px;font-size:16px;color:#000000;">4.100,00</div>
<div class="t" style="left:772.60px;top:612.50px;font-size:16px;color:#000000;transform:scaleX(0.8585);">R$</div>
<div class="t" style="left:851.10px;top:612.50px;font-size:16px;color:#000000;">6,18</div>
<div class="t" style="left:962.24px;top:612.50px;font-size:16px;color:#000000;transform:scaleX(0.9850);">6,63%</div>
<div class="r" style="left:1077px;top:608px;width:86px;height:23px;overflow:hidden;">
<div class="t" style="right:3px;top:4.50px;font-size:16px;color:#000;">500png.png</div>
</div>
<div class="t" style="left:84.35px;top:636.50px;font-size:16px;color:#000000;transform:scaleX(1.0200);">20/07/2025</div>
<div class="t" style="left:219.05px;top:636.50px;font-size:16px;color:#000000;transform:scaleX(0.9600);">Diesel S10</div>
<div class="t" style="left:338.78px;top:636.50px;font-size:16px;color:#000000;transform:scaleX(0.9900);">Fornecedor 3</div>
<div class="t" style="left:506.75px;top:636.50px;font-size:16px;color:#000000;">1.300,00</div>
<div class="t" style="left:629.00px;top:636.50px;font-size:16px;color:#000000;transform:scaleX(0.8585);">R$</div>
<div class="t" style="left:689.70px;top:636.50px;font-size:16px;color:#000000;">8.000,00</div>
<div class="t" style="left:772.60px;top:636.50px;font-size:16px;color:#000000;transform:scaleX(0.8585);">R$</div>
<div class="t" style="left:851.10px;top:636.50px;font-size:16px;color:#000000;">6,15</div>
<div class="t" style="left:957.86px;top:636.50px;font-size:16px;color:#000000;transform:scaleX(0.9850);">13,00%</div>
<div class="r" style="left:1077px;top:632px;width:86px;height:23px;overflow:hidden;">
<div class="t" style="right:3px;top:4.50px;font-size:16px;color:#000;">S10png.png</div>
</div>
<div class="t" style="left:84.35px;top:660.50px;font-size:16px;color:#000000;transform:scaleX(1.0200);">20/08/2025</div>
<div class="t" style="left:214.78px;top:660.50px;font-size:16px;color:#000000;transform:scaleX(0.9600);">Diesel S500</div>
<div class="t" style="left:338.78px;top:660.50px;font-size:16px;color:#000000;transform:scaleX(0.9900);">Fornecedor 2</div>
<div class="t" style="left:513.45px;top:660.50px;font-size:16px;color:#000000;">528,00</div>
<div class="t" style="left:629.00px;top:660.50px;font-size:16px;color:#000000;transform:scaleX(0.8585);">R$</div>
<div class="t" style="left:689.70px;top:660.50px;font-size:16px;color:#000000;">3.500,00</div>
<div class="t" style="left:772.60px;top:660.50px;font-size:16px;color:#000000;transform:scaleX(0.8585);">R$</div>
<div class="t" style="left:851.10px;top:660.50px;font-size:16px;color:#000000;">6,63</div>
<div class="t" style="left:962.24px;top:660.50px;font-size:16px;color:#000000;transform:scaleX(0.9850);">5,28%</div>
<div class="r" style="left:1077px;top:656px;width:86px;height:23px;overflow:hidden;">
<div class="t" style="right:3px;top:4.50px;font-size:16px;color:#000;">500png.png</div>
</div>
<div class="t" style="left:84.35px;top:684.50px;font-size:16px;color:#000000;transform:scaleX(1.0200);">20/09/2025</div>
<div class="t" style="left:231.86px;top:684.50px;font-size:16px;color:#000000;transform:scaleX(0.9600);">Arla 32</div>
<div class="t" style="left:338.78px;top:684.50px;font-size:16px;color:#000000;transform:scaleX(0.9900);">Fornecedor 2</div>
<div class="t" style="left:513.45px;top:684.50px;font-size:16px;color:#000000;">600,00</div>
<div class="t" style="left:629.00px;top:684.50px;font-size:16px;color:#000000;transform:scaleX(0.8585);">R$</div>
<div class="t" style="left:689.70px;top:684.50px;font-size:16px;color:#000000;">3.500,00</div>
<div class="t" style="left:772.60px;top:684.50px;font-size:16px;color:#000000;transform:scaleX(0.8585);">R$</div>
<div class="t" style="left:851.10px;top:684.50px;font-size:16px;color:#000000;">5,83</div>
<div class="t" style="left:957.86px;top:684.50px;font-size:16px;color:#000000;transform:scaleX(0.9850);">60,00%</div>
<div class="r" style="left:1077px;top:680px;width:86px;height:23px;overflow:hidden;">
<div class="t" style="right:3px;top:4.50px;font-size:16px;color:#000;">06-Arla.png</div>
</div>
<div class="t" style="left:84.35px;top:708.50px;font-size:16px;color:#000000;transform:scaleX(1.0200);">20/10/2025</div>
<div class="t" style="left:214.78px;top:708.50px;font-size:16px;color:#000000;transform:scaleX(0.9600);">Diesel S500</div>
<div class="t" style="left:338.78px;top:708.50px;font-size:16px;color:#000000;transform:scaleX(0.9900);">Fornecedor 1</div>
<div class="t" style="left:513.45px;top:708.50px;font-size:16px;color:#000000;">631,00</div>
<div class="t" style="left:629.00px;top:708.50px;font-size:16px;color:#000000;transform:scaleX(0.8585);">R$</div>
<div class="t" style="left:689.70px;top:708.50px;font-size:16px;color:#000000;">3.800,00</div>
<div class="t" style="left:772.60px;top:708.50px;font-size:16px;color:#000000;transform:scaleX(0.8585);">R$</div>
<div class="t" style="left:851.10px;top:708.50px;font-size:16px;color:#000000;">6,02</div>
<div class="t" style="left:962.24px;top:708.50px;font-size:16px;color:#000000;transform:scaleX(0.9850);">6,31%</div>
<div class="r" style="left:1077px;top:704px;width:86px;height:23px;overflow:hidden;">
<div class="t" style="right:3px;top:4.50px;font-size:16px;color:#000;">500png.png</div>
</div>
<div class="t" style="left:84.96px;top:732.50px;font-size:16px;color:#000000;transform:scaleX(1.0200);">21/11/2025</div>
<div class="t" style="left:219.05px;top:732.50px;font-size:16px;color:#000000;transform:scaleX(0.9600);">Diesel S10</div>
<div class="t" style="left:338.78px;top:732.50px;font-size:16px;color:#000000;transform:scaleX(0.9900);">Fornecedor 1</div>
<div class="t" style="left:513.45px;top:732.50px;font-size:16px;color:#000000;">800,00</div>
<div class="t" style="left:629.00px;top:732.50px;font-size:16px;color:#000000;transform:scaleX(0.8585);">R$</div>
<div class="t" style="left:689.70px;top:732.50px;font-size:16px;color:#000000;">5.000,00</div>
<div class="t" style="left:772.60px;top:732.50px;font-size:16px;color:#000000;transform:scaleX(0.8585);">R$</div>
<div class="t" style="left:851.10px;top:732.50px;font-size:16px;color:#000000;">6,25</div>
<div class="t" style="left:962.24px;top:732.50px;font-size:16px;color:#000000;transform:scaleX(0.9850);">8,00%</div>
<div class="r" style="left:1077px;top:728px;width:86px;height:23px;overflow:hidden;">
<div class="t" style="right:3px;top:4.50px;font-size:16px;color:#000;">S10png.png</div>
</div>
<div class="t" style="left:84.35px;top:756.50px;font-size:16px;color:#000000;transform:scaleX(1.0200);">22/12/2025</div>
<div class="t" style="left:202.39px;top:756.50px;font-size:16px;color:#000000;transform:scaleX(0.9600);">Posto externo 1</div>
<div class="t" style="left:338.78px;top:756.50px;font-size:16px;color:#000000;transform:scaleX(0.9900);">Fornecedor 2</div>
<div class="t" style="left:513.45px;top:756.50px;font-size:16px;color:#000000;">513,00</div>
<div class="t" style="left:629.00px;top:756.50px;font-size:16px;color:#000000;transform:scaleX(0.8585);">R$</div>
<div class="t" style="left:689.70px;top:756.50px;font-size:16px;color:#000000;">3.400,00</div>
<div class="t" style="left:772.60px;top:756.50px;font-size:16px;color:#000000;transform:scaleX(0.8585);">R$</div>
<div class="t" style="left:851.10px;top:756.50px;font-size:16px;color:#000000;">6,63</div>
<div class="t" style="left:962.24px;top:756.50px;font-size:16px;color:#000000;transform:scaleX(0.9850);">0,00%</div>
<div class="r" style="left:1077px;top:752px;width:86px;height:23px;overflow:hidden;">
<div class="t" style="right:3px;top:4.50px;font-size:16px;color:#000;">asolina.png</div>
</div>
<div class="t" style="left:84.35px;top:780.50px;font-size:16px;color:#000000;transform:scaleX(1.0200);">23/12/2025</div>
<div class="t" style="left:214.78px;top:780.50px;font-size:16px;color:#000000;transform:scaleX(0.9600);">Diesel S500</div>
<div class="t" style="left:338.78px;top:780.50px;font-size:16px;color:#000000;transform:scaleX(0.9900);">Fornecedor 3</div>
<div class="t" style="left:513.45px;top:780.50px;font-size:16px;color:#000000;">643,00</div>
<div class="t" style="left:629.00px;top:780.50px;font-size:16px;color:#000000;transform:scaleX(0.8585);">R$</div>
<div class="t" style="left:689.70px;top:780.50px;font-size:16px;color:#000000;">3.800,00</div>
<div class="t" style="left:772.60px;top:780.50px;font-size:16px;color:#000000;transform:scaleX(0.8585);">R$</div>
<div class="t" style="left:851.10px;top:780.50px;font-size:16px;color:#000000;">5,91</div>
<div class="t" style="left:962.24px;top:780.50px;font-size:16px;color:#000000;transform:scaleX(0.9850);">6,43%</div>
<div class="r" style="left:1077px;top:776px;width:86px;height:23px;overflow:hidden;">
<div class="t" style="right:3px;top:4.50px;font-size:16px;color:#000;">500png.png</div>
</div>
<div class="t" style="left:84.35px;top:804.50px;font-size:16px;color:#000000;transform:scaleX(1.0200);">24/12/2025</div>
<div class="t" style="left:219.05px;top:804.50px;font-size:16px;color:#000000;transform:scaleX(0.9600);">Diesel S10</div>
<div class="t" style="left:338.78px;top:804.50px;font-size:16px;color:#000000;transform:scaleX(0.9900);">Fornecedor 2</div>
<div class="t" style="left:513.45px;top:804.50px;font-size:16px;color:#000000;">353,00</div>
<div class="t" style="left:629.00px;top:804.50px;font-size:16px;color:#000000;transform:scaleX(0.8585);">R$</div>
<div class="t" style="left:689.70px;top:804.50px;font-size:16px;color:#000000;">2.300,00</div>
<div class="t" style="left:772.60px;top:804.50px;font-size:16px;color:#000000;transform:scaleX(0.8585);">R$</div>
<div class="t" style="left:851.10px;top:804.50px;font-size:16px;color:#000000;">6,52</div>
<div class="t" style="left:962.24px;top:804.50px;font-size:16px;color:#000000;transform:scaleX(0.9850);">3,53%</div>
<div class="r" style="left:1077px;top:800px;width:86px;height:23px;overflow:hidden;">
<div class="t" style="right:3px;top:4.50px;font-size:16px;color:#000;">S10png.png</div>
</div>
<div class="t" style="left:84.35px;top:828.50px;font-size:16px;color:#000000;transform:scaleX(1.0200);">25/12/2025</div>
<div class="t" style="left:214.78px;top:828.50px;font-size:16px;color:#000000;transform:scaleX(0.9600);">Diesel S500</div>
<div class="t" style="left:338.78px;top:828.50px;font-size:16px;color:#000000;transform:scaleX(0.9900);">Fornecedor 2</div>
<div class="t" style="left:513.45px;top:828.50px;font-size:16px;color:#000000;">502,00</div>
<div class="t" style="left:629.00px;top:828.50px;font-size:16px;color:#000000;transform:scaleX(0.8585);">R$</div>
<div class="t" style="left:689.70px;top:828.50px;font-size:16px;color:#000000;">3.100,00</div>
<div class="t" style="left:772.60px;top:828.50px;font-size:16px;color:#000000;transform:scaleX(0.8585);">R$</div>
<div class="t" style="left:851.10px;top:828.50px;font-size:16px;color:#000000;">6,18</div>
<div class="t" style="left:962.24px;top:828.50px;font-size:16px;color:#000000;transform:scaleX(0.9850);">5,02%</div>
<div class="r" style="left:1077px;top:824px;width:86px;height:23px;overflow:hidden;">
<div class="t" style="right:3px;top:4.50px;font-size:16px;color:#000;">500png.png</div>
</div>
<div class="t" style="left:84.35px;top:852.50px;font-size:16px;color:#000000;transform:scaleX(1.0200);">26/12/2025</div>
<div class="t" style="left:214.78px;top:852.50px;font-size:16px;color:#000000;transform:scaleX(0.9600);">Diesel S500</div>
<div class="t" style="left:338.78px;top:852.50px;font-size:16px;color:#000000;transform:scaleX(0.9900);">Fornecedor 1</div>
<div class="t" style="left:513.45px;top:852.50px;font-size:16px;color:#000000;">792,00</div>
<div class="t" style="left:629.00px;top:852.50px;font-size:16px;color:#000000;transform:scaleX(0.8585);">R$</div>
<div class="t" style="left:689.70px;top:852.50px;font-size:16px;color:#000000;">4.700,00</div>
<div class="t" style="left:772.60px;top:852.50px;font-size:16px;color:#000000;transform:scaleX(0.8585);">R$</div>
<div class="t" style="left:851.10px;top:852.50px;font-size:16px;color:#000000;">5,93</div>
<div class="t" style="left:962.24px;top:852.50px;font-size:16px;color:#000000;transform:scaleX(0.9850);">7,92%</div>
<div class="r" style="left:1077px;top:848px;width:86px;height:23px;overflow:hidden;">
<div class="t" style="right:3px;top:4.50px;font-size:16px;color:#000;">500png.png</div>
</div>
<div class="t" style="left:84.35px;top:876.50px;font-size:16px;color:#000000;transform:scaleX(1.0200);">26/05/2025</div>
<div class="t" style="left:219.05px;top:876.50px;font-size:16px;color:#000000;transform:scaleX(0.9600);">Diesel S10</div>
<div class="t" style="left:338.78px;top:876.50px;font-size:16px;color:#000000;transform:scaleX(0.9900);">Fornecedor 1</div>
<div class="t" style="left:514.60px;top:876.50px;font-size:16px;color:#000000;">111,00</div>
<div class="t" style="left:627.00px;top:876.50px;font-size:16px;color:#000000;transform:scaleX(0.8585);">R$</div>
<div class="t" style="left:703.10px;top:876.50px;font-size:16px;color:#000000;">750,00</div>
<div class="t" style="left:772.60px;top:876.50px;font-size:16px;color:#000000;transform:scaleX(0.8585);">R$</div>
<div class="t" style="left:851.10px;top:876.50px;font-size:16px;color:#000000;">6,76</div>
<div class="t" style="left:962.83px;top:876.50px;font-size:16px;color:#000000;transform:scaleX(0.9850);">1,11%</div>
<div class="r" style="left:1077px;top:872px;width:86px;height:23px;overflow:hidden;">
<div class="t" style="right:3px;top:4.50px;font-size:16px;color:#000;">S10png.png</div>
</div>
<div class="t" style="left:84.35px;top:900.50px;font-size:16px;color:#000000;transform:scaleX(1.0200);">25/04/2025</div>
<div class="t" style="left:214.78px;top:900.50px;font-size:16px;color:#000000;transform:scaleX(0.9600);">Diesel S500</div>
<div class="t" style="left:338.78px;top:900.50px;font-size:16px;color:#000000;transform:scaleX(0.9900);">Fornecedor 2</div>
<div class="t" style="left:513.45px;top:900.50px;font-size:16px;color:#000000;">691,00</div>
<div class="t" style="left:629.00px;top:900.50px;font-size:16px;color:#000000;transform:scaleX(0.8585);">R$</div>
<div class="t" style="left:689.70px;top:900.50px;font-size:16px;color:#000000;">3.600,00</div>
<div class="t" style="left:772.60px;top:900.50px;font-size:16px;color:#000000;transform:scaleX(0.8585);">R$</div>
<div class="t" style="left:851.10px;top:900.50px;font-size:16px;color:#000000;">5,21</div>
<div class="t" style="left:962.24px;top:900.50px;font-size:16px;color:#000000;transform:scaleX(0.9850);">6,91%</div>
<div class="r" style="left:1077px;top:896px;width:86px;height:23px;overflow:hidden;">
<div class="t" style="right:3px;top:4.50px;font-size:16px;color:#000;">500png.png</div>
</div>
<div class="t" style="left:84.35px;top:924.50px;font-size:16px;color:#000000;transform:scaleX(1.0200);">26/04/2025</div>
<div class="t" style="left:202.39px;top:924.50px;font-size:16px;color:#000000;transform:scaleX(0.9600);">Posto externo 1</div>
<div class="t" style="left:338.78px;top:924.50px;font-size:16px;color:#000000;transform:scaleX(0.9900);">Fornecedor 3</div>
<div class="t" style="left:513.45px;top:924.50px;font-size:16px;color:#000000;">200,00</div>
<div class="t" style="left:629.00px;top:924.50px;font-size:16px;color:#000000;transform:scaleX(0.8585);">R$</div>
<div class="t" style="left:689.70px;top:924.50px;font-size:16px;color:#000000;">1.350,00</div>
<div class="t" style="left:772.60px;top:924.50px;font-size:16px;color:#000000;transform:scaleX(0.8585);">R$</div>
<div class="t" style="left:851.10px;top:924.50px;font-size:16px;color:#000000;">6,75</div>
<div class="t" style="left:962.24px;top:924.50px;font-size:16px;color:#000000;transform:scaleX(0.9850);">0,00%</div>
<div class="r" style="left:1077px;top:920px;width:86px;height:23px;overflow:hidden;">
<div class="t" style="right:3px;top:4.50px;font-size:16px;color:#000;">asolina.png</div>
</div>
<div class="r" style="left:197px;top:364px;width:114px;height:48px;border:2px solid #217346;"></div>
<div class="r" style="left:199px;top:366px;width:114px;height:1px;background:#ffffff;"></div>
<div class="r" style="left:199px;top:366px;width:1px;height:48px;background:#ffffff;"></div>
<div class="r" style="left:312px;top:366px;width:1px;height:48px;background:#ffffff;"></div>
<div class="r" style="left:199px;top:413px;width:114px;height:1px;background:#ffffff;"></div>
<div class="r" style="left:311px;top:412px;width:6px;height:6px;background:#217346;"></div>
<div class="r" style="left:1159px;top:940px;width:5px;height:4px;background:#2b57c4;"></div>
<div class="r" style="left:1895px;top:270px;width:26px;height:723px;background:#e1e9e6;"></div>
<div class="r" style="left:1898px;top:270px;width:21px;height:686px;background:#f3f3f3;border-radius:10px;"></div>
<svg class="s" style="left:1902px;top:275px;" width="13" height="10" viewBox="0 0 13 10"><path d="M6.5 1 L12 8.5 H1 Z" fill="#6e6e6e" stroke="#6e6e6e" stroke-width="1" stroke-linejoin="round"/></svg>
<div class="r" style="left:1903px;top:291px;width:11px;height:629px;background:#707070;border-radius:6px;"></div>
<svg class="s" style="left:1902px;top:940px;" width="13" height="10" viewBox="0 0 13 10"><path d="M1 1.5 H12 L6.5 9 Z" fill="#6e6e6e" stroke="#6e6e6e" stroke-width="1" stroke-linejoin="round"/></svg>
<div class="r" style="left:0px;top:953px;width:253px;height:40px;background:#e8e9e9;border-top-right-radius:8px;"></div>
<div class="r" style="left:336px;top:953px;width:1559px;height:40px;background:linear-gradient(90deg,#e8e9e9 0,#e8e9e9 770px,#e2eae7 830px,#e2eae7 100%);border-top-left-radius:8px;"></div>
<div class="r" style="left:0px;top:953px;width:248px;height:1px;background:#dcdede;"></div>
<div class="r" style="left:341px;top:953px;width:1554px;height:1px;background:#dcdede;"></div>
<div class="r" style="left:253px;top:975px;width:83px;height:18px;background:#e8e9e9;"></div>
<svg class="s" style="left:31px;top:964px;" width="12" height="16" viewBox="0 0 12 16"><path d="M9 2 L3 8 L9 14" fill="none" stroke="#9a9a9a" stroke-width="1.3"/></svg>
<svg class="s" style="left:71px;top:964px;" width="12" height="16" viewBox="0 0 12 16"><path d="M3 2 L9 8 L3 14" fill="none" stroke="#9a9a9a" stroke-width="1.3"/></svg>
<div class="t" style="left:154.00px;top:964.84px;font-size:17px;color:#3a3a3a;transform:scaleX(0.9806);">Cadastros</div>
<div class="r" style="left:247px;top:961px;width:1px;height:23px;background:#c9cdcc;"></div>
<div class="r" style="left:253px;top:953px;width:83px;height:35px;background:#fff;border-radius:0 0 7px 7px;"></div>
<div class="t" style="left:263.00px;top:960.68px;font-size:18px;color:#242424;font-weight:bold;transform:scaleX(0.9375);">Entrada</div>
<div class="r" style="left:263px;top:983px;width:63px;height:2.5px;background:#107c41;border-radius:1px;"></div>
<div class="r" style="left:341px;top:961px;width:1px;height:23px;background:#c9cdcc;"></div>
<div class="t" style="left:359.00px;top:964.84px;font-size:17px;color:#3a3a3a;transform:scaleX(0.9213);">Saída</div>
<div class="r" style="left:416px;top:961px;width:1px;height:23px;background:#c9cdcc;"></div>
<svg class="s" style="left:468px;top:963px;" width="17" height="17" viewBox="0 0 17 17"><path d="M8.5 1 V16 M1 8.5 H16" stroke="#3a3a3a" stroke-width="1.5"/></svg>
<svg class="s" style="left:1155px;top:966px;" width="5" height="15" viewBox="0 0 5 15"><rect x="0.5" y="0.5" width="3" height="3" fill="#2a2a2a"/><rect x="0.5" y="6" width="3" height="3" fill="#2a2a2a"/><rect x="0.5" y="11.5" width="3" height="3" fill="#2a2a2a"/></svg>
<div class="r" style="left:1177px;top:962px;width:721px;height:21px;background:#f3f3f3;border-radius:10px;"></div>
<svg class="s" style="left:1182px;top:966px;" width="11" height="13" viewBox="0 0 11 13"><path d="M9.5 1 V12 L1.5 6.5 Z" fill="#6e6e6e" stroke="#6e6e6e" stroke-width="1" stroke-linejoin="round"/></svg>
<div class="r" style="left:1198px;top:967px;width:653px;height:11px;background:#707070;border-radius:6px;"></div>
<svg class="s" style="left:1882px;top:966px;" width="11" height="13" viewBox="0 0 11 13"><path d="M1.5 1 V12 L9.5 6.5 Z" fill="#6e6e6e" stroke="#6e6e6e" stroke-width="1" stroke-linejoin="round"/></svg>
<div class="r" style="left:0px;top:993px;width:1921px;height:27px;background:#f4f4f4;"></div>
<div class="t" style="left:15.00px;top:999.65px;font-size:15px;color:#2a2a2a;transform:scaleX(0.8597);">Pronto</div>
<svg class="s" style="left:79px;top:998px;" width="21" height="19" viewBox="0 0 21 19"><path d="M7 16 H2 V2 H18 V8" fill="none" stroke="#2e2e2e" stroke-width="1.4"/><path d="M2 5 H18" stroke="#2e2e2e" stroke-width="1.2"/><circle cx="13" cy="12" r="5" fill="#f3f3f3" stroke="#2e2e2e" stroke-width="1.3"/><circle cx="13" cy="12" r="2.1" fill="#2e2e2e"/><path d="M4.5 8 H7 M4.5 11 H6" stroke="#2e2e2e" stroke-width="1.1"/></svg>
<svg class="s" style="left:119px;top:997px;" width="20" height="20" viewBox="0 0 20 20"><circle cx="11.5" cy="4" r="2.3" fill="none" stroke="#2e2e2e" stroke-width="1.3"/><path d="M10 6.5 C8 6 6 5 4.5 3.5 C2.8 3 2.3 5.5 4 6.2 C6 7 7.5 7.5 8 9 C8.5 12 7.5 15 6.5 17 C6 18.5 7.5 19.5 8.5 18.3 M13 6.5 C15 6 16.5 5 17.5 4 C19 3.5 19.5 6 18 6.8 C16.5 7.3 15 8 15 9.5 V11.5" fill="none" stroke="#2e2e2e" stroke-width="1.3"/><path d="M12 14.5 L15 17.5 L19.5 12" fill="none" stroke="#2e2e2e" stroke-width="1.3"/></svg>
<div class="t" style="left:142.00px;top:999.65px;font-size:15px;color:#2a2a2a;transform:scaleX(0.8777);">Acessibilidade: tudo certo</div>
<svg class="s" style="left:1380px;top:997px;" width="22" height="20" viewBox="0 0 22 20"><path d="M8 14 H3 V3.5 H20 V10" fill="none" stroke="#333" stroke-width="1.5"/><circle cx="14" cy="13" r="3.8" fill="#f3f3f3" stroke="#2a2a2a" stroke-width="1.4"/><path d="M17.12 14.80 L18.85 15.80 M14.00 16.60 L14.00 18.60 M10.88 14.80 L9.15 15.80 M10.88 11.20 L9.15 10.20 M14.00 9.40 L14.00 7.40 M17.12 11.20 L18.85 10.20 " stroke="#2a2a2a" stroke-width="2.2"/><circle cx="14" cy="13" r="1.4" fill="#2a2a2a"/></svg>
<div class="t" style="left:1403.00px;top:999.65px;font-size:15px;color:#2a2a2a;transform:scaleX(0.8671);">Exibir Configurações</div>
<div class="r" style="left:1548px;top:994px;width:50px;height:26px;background:#e0e0e0;"></div>
<svg class="s" style="left:1563px;top:998px;" width="20" height="18" viewBox="0 0 20 18"><rect x="1" y="1" width="17" height="15" fill="none" stroke="#3a3a3a" stroke-width="1.3"/><path d="M1 6 H18 M1 11 H18 M6.7 1 V16 M12.3 1 V16" stroke="#3a3a3a" stroke-width="1.2"/></svg>
<svg class="s" style="left:1613px;top:998px;" width="20" height="18" viewBox="0 0 20 18"><rect x="1" y="1" width="17" height="15" fill="none" stroke="#3a3a3a" stroke-width="1.3"/><rect x="5" y="4" width="9" height="9" fill="none" stroke="#3a3a3a" stroke-width="1.1"/><path d="M7 7 H12 M7 10 H12" stroke="#3a3a3a" stroke-width="1"/></svg>
<svg class="s" style="left:1663px;top:998px;" width="20" height="18" viewBox="0 0 20 18"><rect x="1" y="1" width="17" height="15" fill="none" stroke="#3a3a3a" stroke-width="1.3"/><path d="M1 9 H10.5 V1 M6 1 V9" fill="none" stroke="#3a3a3a" stroke-width="1.2"/></svg>
<div class="r" style="left:1704px;top:1006px;width:9px;height:1.3px;background:#3a3a3a;"></div>
<div class="r" style="left:1721px;top:1006px;width:125px;height:1px;background:#7a7a7a;"></div>
<div class="r" style="left:1782px;top:1000px;width:5px;height:14px;background:#4a4a4a;"></div>
<svg class="s" style="left:1850px;top:1000px;" width="14" height="14" viewBox="0 0 14 14"><path d="M7 1 V13 M1 7 H13" stroke="#3a3a3a" stroke-width="1.3"/></svg>
<div class="t" style="left:1878.00px;top:999.65px;font-size:15px;color:#2a2a2a;transform:scaleX(0.8073);">100%</div>
<div class="r" style="left:0px;top:0px;width:1px;height:1020px;background:#707070;"></div>
</body></html>
